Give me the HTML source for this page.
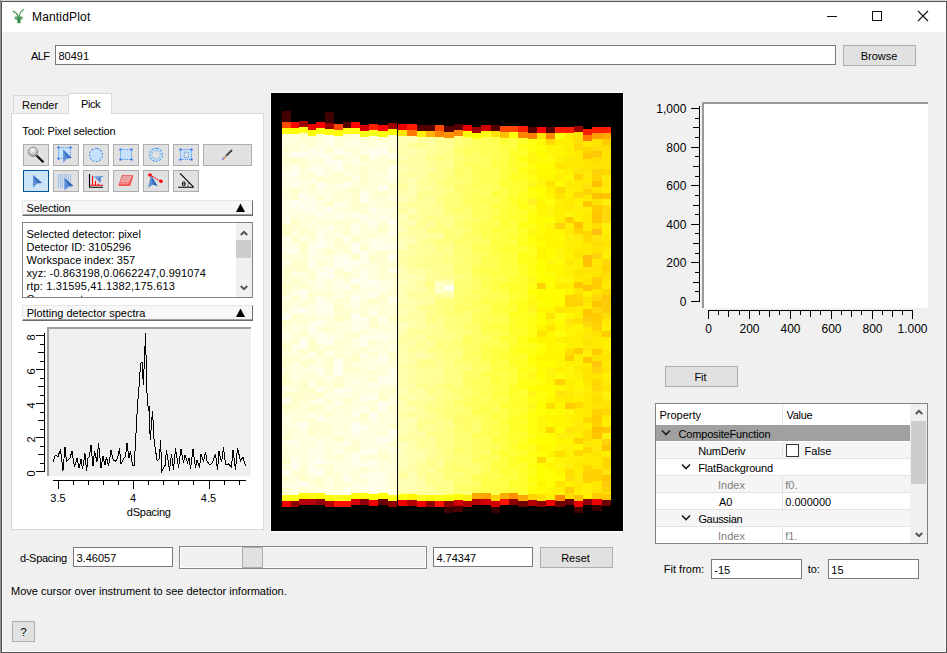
<!DOCTYPE html>
<html><head><meta charset="utf-8">
<style>
*{box-sizing:border-box}
html,body{margin:0;padding:0}
body{width:947px;height:653px;position:relative;overflow:hidden;background:#f0f0f0;font-family:"Liberation Sans",sans-serif;font-size:11px;color:#000}
.a{position:absolute}
.t{position:absolute;white-space:nowrap;line-height:13px;font-size:11px}
.btn{position:absolute;background:#e1e1e1;border:1px solid #adadad}
.inp{position:absolute;background:#fff;border:1px solid #7a7a7a}
.tb{position:absolute;background:#e1e1e1;border:1px solid #adadad}
.tb svg{position:absolute;left:0;top:0}
</style></head><body>
<!-- window frame -->
<div class="a" style="left:0;top:0;width:947px;height:1px;background:#d4d4d4"></div>
<div class="a" style="left:0;top:0;width:1px;height:653px;background:#8f8f8f"></div>
<div class="a" style="left:1px;top:1px;width:946px;height:652px;border:1px solid #555"></div>
<div class="a" style="left:945px;top:2px;width:1px;height:650px;background:#fdfdfd"></div>
<div class="a" style="left:2px;top:32px;width:1px;height:620px;background:#fafafa"></div>
<div class="a" style="left:2px;top:651px;width:944px;height:1px;background:#fdfdfd"></div>
<!-- title bar -->
<div class="a" style="left:2px;top:2px;width:943px;height:30px;background:#fff"></div>
<svg class="a" style="left:11px;top:7px" width="16" height="18" viewBox="0 0 16 18">
 <g fill="none" stroke="#3f9150" stroke-width="1.2" stroke-linecap="round" opacity="0.9">
  <path d="M2.2 4.4Q5.6 5.2 7.1 9"/>
  <path d="M12.8 2.5Q9.2 4 8.3 9"/>
 </g>
 <ellipse cx="7.6" cy="10.9" rx="4.3" ry="1.9" fill="#4a9a5a" opacity="0.85"/>
 <path d="M6 11.5H9.7L9.5 14.5Q10.3 15.5 9.4 16.3H6.6Q5.7 15.5 6.3 14.5z" fill="#3f9150" opacity="0.9"/>
 <path d="M7.4 9.5h1.4v6h-1.4z" fill="#2f8a45"/>
</svg>
<div class="t" style="left:32px;top:10px;font-size:12px;line-height:14px;letter-spacing:0.17px">MantidPlot</div>
<!-- min/max/close -->
<div class="a" style="left:827px;top:16px;width:10px;height:1px;background:#111"></div>
<div class="a" style="left:872px;top:11px;width:10px;height:10px;border:1px solid #111"></div>
<svg class="a" style="left:917px;top:10px" width="12" height="12" viewBox="0 0 12 12"><path d="M1 1L11 11M11 1L1 11" stroke="#111" stroke-width="1.1"/></svg>

<!-- ALF row -->
<div class="t" style="left:31px;top:50px;letter-spacing:-0.6px">ALF</div>
<div class="inp" style="left:55px;top:45px;width:781px;height:20px"></div>
<div class="t" style="left:58.5px;top:50px">80491</div>
<div class="btn" style="left:843px;top:45px;width:73px;height:21px"></div>
<div class="t" style="left:842.5px;top:50px;width:73px;text-align:center">Browse</div>

<!-- tabs -->
<div class="a" style="left:13px;top:95px;width:56px;height:19px;background:#f0f0f0;border:1px solid #d9d9d9;border-bottom:none"></div>
<div class="a" style="left:11px;top:113px;width:253px;height:417px;background:#fff;border:1px solid #d9d9d9"></div>
<div class="a" style="left:68px;top:93px;width:44px;height:21px;background:#fff;border:1px solid #d9d9d9;border-bottom:none"></div>
<div class="t" style="left:22px;top:99px">Render</div>
<div class="t" style="left:81px;top:98px;letter-spacing:-0.4px">Pick</div>
<div class="t" style="left:22.3px;top:125px;letter-spacing:-0.17px">Tool: Pixel selection</div>

<div class="tb" style="left:23px;top:144px;width:26px;height:22px;"><svg width="26" height="22" viewBox="1 1 26 22" style="left:-1px;top:-1px;position:absolute"><defs><radialGradient id="mg" cx="0.45" cy="0.3" r="0.75"><stop offset="0" stop-color="#fafafa"/><stop offset="0.6" stop-color="#c4c4c4"/><stop offset="1" stop-color="#8c8c8c"/></radialGradient></defs><path d="M14.5 12.5L20.8 18.6" stroke="#111" stroke-width="2.3" stroke-linecap="round"/><path d="M13.5 11.8L15.5 13.5" stroke="#555" stroke-width="1.6"/><circle cx="11" cy="8.8" r="4.7" fill="url(#mg)" stroke="#7a7a7a" stroke-width="0.8"/></svg></div><div class="tb" style="left:53px;top:144px;width:26px;height:22px;"><svg width="26" height="22" viewBox="1 1 26 22" style="left:-1px;top:-1px;position:absolute"><rect x="6.5" y="4.5" width="12.0" height="11.0" fill="#c4e2fb"/><path d="M8.5 4.5H17.5M8.5 15.5H17.5M6.5 6.5V14.5M18.5 6.5V14.5" stroke="#3d7fe0" stroke-width="1" stroke-dasharray="1 1.3"/><rect x="5.4" y="3.4" width="2.2" height="2.2" rx="0.4" fill="#1e6ff0"/><rect x="17.4" y="3.4" width="2.2" height="2.2" rx="0.4" fill="#1e6ff0"/><rect x="5.4" y="14.4" width="2.2" height="2.2" rx="0.4" fill="#1e6ff0"/><path d="M11 6.5L19.8 15L15.3 15.3L11.2 19.8z" fill="#5e93dc"/><path d="M11 6.5L19.8 15L15.3 15.3z" fill="#3b73cc"/></svg></div><div class="tb" style="left:83px;top:144px;width:26px;height:22px;"><svg width="26" height="22" viewBox="1 1 26 22" style="left:-1px;top:-1px;position:absolute"><circle cx="14" cy="12" r="6.5" fill="#c4e2fb"/><circle cx="14" cy="12" r="6.5" fill="none" stroke="#5b95dc" stroke-width="1.1" stroke-dasharray="2.1 1.3" transform="rotate(-80 14 12)"/></svg></div><div class="tb" style="left:113px;top:144px;width:26px;height:22px;"><svg width="26" height="22" viewBox="1 1 26 22" style="left:-1px;top:-1px;position:absolute"><rect x="8.5" y="6.5" width="11.0" height="10.0" fill="#c4e2fb"/><path d="M10.5 6.5H18.5M10.5 16.5H18.5M8.5 8.5V15.5M19.5 8.5V15.5" stroke="#3d7fe0" stroke-width="1" stroke-dasharray="1 1.3"/><rect x="7.4" y="5.4" width="2.2" height="2.2" rx="0.4" fill="#1e6ff0"/><rect x="18.4" y="5.4" width="2.2" height="2.2" rx="0.4" fill="#1e6ff0"/><rect x="7.4" y="15.4" width="2.2" height="2.2" rx="0.4" fill="#1e6ff0"/><rect x="18.4" y="15.4" width="2.2" height="2.2" rx="0.4" fill="#1e6ff0"/></svg></div><div class="tb" style="left:143px;top:144px;width:26px;height:22px;"><svg width="26" height="22" viewBox="1 1 26 22" style="left:-1px;top:-1px;position:absolute"><circle cx="14" cy="11.8" r="5.2" fill="none" stroke="#c4e2fb" stroke-width="2.6"/><circle cx="14" cy="11.8" r="6.5" fill="none" stroke="#5b95dc" stroke-width="1.1" stroke-dasharray="2.1 1.3" transform="rotate(-80 14 11.8)"/><circle cx="14" cy="11.8" r="4.2" fill="none" stroke="#4f8ddc" stroke-width="1" stroke-dasharray="1 1.4"/></svg></div><div class="tb" style="left:173px;top:144px;width:26px;height:22px;"><svg width="26" height="22" viewBox="1 1 26 22" style="left:-1px;top:-1px;position:absolute"><path d="M8.5 6.5h11v10h-11z M12.3 9.3v5.2h4.2v-5.2z" fill="#c4e2fb" fill-rule="evenodd"/><path d="M10.5 6.5H18.5M10.5 16.5H18.5M8.5 8.5V15.5M19.5 8.5V15.5" stroke="#3d7fe0" stroke-width="1" stroke-dasharray="1 1.3"/><rect x="7.4" y="5.4" width="2.2" height="2.2" rx="0.4" fill="#1e6ff0"/><rect x="18.4" y="5.4" width="2.2" height="2.2" rx="0.4" fill="#1e6ff0"/><rect x="7.4" y="15.4" width="2.2" height="2.2" rx="0.4" fill="#1e6ff0"/><rect x="18.4" y="15.4" width="2.2" height="2.2" rx="0.4" fill="#1e6ff0"/><path d="M12.3 9.3h4.2v5.2h-4.2z" fill="none" stroke="#4f8ddc" stroke-width="1" stroke-dasharray="1 1.1"/></svg></div><div class="tb" style="left:203px;top:144px;width:49px;height:22px;"><svg width="49" height="22" viewBox="1 1 49 22" style="left:-1px;top:-1px;position:absolute"><path d="M24.5 12.5L29.5 7.5" stroke="#444" stroke-width="1.8" stroke-linecap="round"/><path d="M21.5 15.5L23.3 13.7" stroke="#d89040" stroke-width="1.8"/><circle cx="21" cy="16" r="0.9" fill="#5a7ad8"/></svg></div><div class="tb" style="left:23px;top:170px;width:26px;height:22px;background:#cce4f7;border-color:#005499"><svg width="26" height="22" viewBox="1 1 26 22" style="left:-1px;top:-1px;position:absolute"><path d="M11.0 6.0L20.0 14.0L15.5 14.3L11.0 18.5z" fill="#5a8fd8"/><path d="M11.0 6.0L20.0 14.0L15.5 14.3z" fill="#3468b8"/></svg></div><div class="tb" style="left:53px;top:170px;width:26px;height:22px;"><svg width="26" height="22" viewBox="1 1 26 22" style="left:-1px;top:-1px;position:absolute"><rect x="5.8" y="5" width="0.9" height="14" fill="#8fbaf0"/><rect x="7.8" y="5" width="0.9" height="14" fill="#8fbaf0"/><rect x="9.8" y="5" width="0.9" height="14" fill="#8fbaf0"/><rect x="11.8" y="5" width="0.9" height="14" fill="#8fbaf0"/><rect x="13.8" y="5" width="0.9" height="14" fill="#8fbaf0"/><rect x="15.8" y="5" width="0.9" height="14" fill="#8fbaf0"/><rect x="17.8" y="5" width="0.9" height="14" fill="#8fbaf0"/><path d="M12.5 9.0L21.5 17.0L17.0 17.3L12.5 21.5z" fill="#5a8fd8"/><path d="M12.5 9.0L21.5 17.0L17.0 17.3z" fill="#3468b8"/></svg></div><div class="tb" style="left:83px;top:170px;width:26px;height:22px;"><svg width="26" height="22" viewBox="1 1 26 22" style="left:-1px;top:-1px;position:absolute"><defs><linearGradient id="bg10" x1="0" y1="0" x2="1" y2="1"><stop offset="0" stop-color="#9cc4f2"/><stop offset="1" stop-color="#1f58b0"/></linearGradient></defs><path d="M7.5 5V18.3H21" fill="none" stroke="#000" stroke-width="1.1"/><path d="M8 16.3H21M10.5 16.3V6.8M13.5 16.3V12M16.5 16.3V14.8" stroke="#f00" stroke-width="1.1"/><path d="M11 7H22L19.2 8.6L18.4 13.8z" fill="url(#bg10)"/></svg></div><div class="tb" style="left:113px;top:170px;width:26px;height:22px;"><svg width="26" height="22" viewBox="1 1 26 22" style="left:-1px;top:-1px;position:absolute"><path d="M10.5 6H20Q21.6 6.3 21 8L18.6 15.8Q18.1 17 16.8 17H7.3Q6.2 17 6.6 15.8L9.7 7Q10 6 10.5 6z" fill="#ef5656"/><path d="M11.2 7.2H19.2L16.7 12.9H8.8z" fill="#e9a0a0" stroke="#f8c8c8" stroke-width="0.6"/><path d="M8.2 13.6H16.6L16.1 15.2H7.7z" fill="#f78a8a"/></svg></div><div class="tb" style="left:143px;top:170px;width:26px;height:22px;"><svg width="26" height="22" viewBox="1 1 26 22" style="left:-1px;top:-1px;position:absolute"><path d="M8 6L18.5 12.2" stroke="#f00" stroke-width="1.2" stroke-dasharray="1.6 1"/><circle cx="8" cy="6" r="1.8" fill="#f00"/><circle cx="19" cy="12.3" r="1.8" fill="#f00"/><path d="M9 6.5L15.5 17L11 15.5L6 18.8z" fill="#5a8fd8"/><path d="M9 6.5L15.5 17L11 15.5z" fill="#3468b8"/></svg></div><div class="tb" style="left:173px;top:170px;width:26px;height:22px;"><svg width="26" height="22" viewBox="1 1 26 22" style="left:-1px;top:-1px;position:absolute"><path d="M8 4.4L21.4 17.8M6.1 18.3H21.8" stroke="#000" stroke-width="1.1"/><ellipse cx="11.8" cy="14.8" rx="1.5" ry="2.1" fill="none" stroke="#000" stroke-width="1"/><path d="M10.4 14.8h2.8" stroke="#000" stroke-width="0.8"/><path d="M16.6 14.2Q15.7 16 16.2 18" fill="none" stroke="#000" stroke-width="0.9" stroke-dasharray="0.9 0.6"/></svg></div>

<!-- Selection header -->
<div class="a" style="left:22px;top:200px;width:231px;height:16px;background:#f7f7f7;border-top:1px solid #e6e6e6;border-left:1px solid #e6e6e6;border-right:1px solid #696969;border-bottom:1px solid #696969;box-shadow:inset 0 -1px #a0a0a0"></div>
<div class="t" style="left:26.5px;top:202px;letter-spacing:-0.15px">Selection</div>
<svg class="a" style="left:236px;top:203px" width="10" height="10"><path d="M4.5 0.5L9 9H0z" fill="#000"/></svg>

<!-- text box -->
<div class="a" style="left:22px;top:222px;width:231px;height:76px;background:#fff;border:1px solid #828282;overflow:hidden">
 <div class="t" style="left:3.5px;top:5px;line-height:13px">Selected detector: pixel<br>Detector ID: 3105296<br>Workspace index: 357<br><span style="letter-spacing:0.1px">xyz: -0.863198,0.0662247,0.991074</span><br><span style="letter-spacing:0.15px">rtp: 1.31595,41.1382,175.613</span><br>Component: x</div>
 <div class="a" style="left:213px;top:0;width:16px;height:74px;background:#f0f0f0"></div>
 <div class="a" style="left:213px;top:17px;width:15px;height:18px;background:#cdcdcd"></div>
 <svg class="a" style="left:216px;top:6px" width="10" height="8"><path d="M1.8 6L5 2.8L8.2 6" fill="none" stroke="#555" stroke-width="2"/></svg>
 <svg class="a" style="left:216px;top:61px" width="10" height="8"><path d="M1.8 2L5 5.2L8.2 2" fill="none" stroke="#555" stroke-width="2"/></svg>
</div>

<!-- Plotting header -->
<div class="a" style="left:22px;top:305px;width:231px;height:16px;background:#f7f7f7;border-top:1px solid #e6e6e6;border-left:1px solid #e6e6e6;border-right:1px solid #696969;border-bottom:1px solid #696969;box-shadow:inset 0 -1px #a0a0a0"></div>
<div class="t" style="left:26.7px;top:307px">Plotting detector spectra</div>
<svg class="a" style="left:236px;top:308px" width="10" height="10"><path d="M4.5 0.5L9 9H0z" fill="#000"/></svg>

<!-- left plot -->
<div class="a" style="left:47px;top:327px;width:204px;height:149px;background:#f0f0f0;border-top:2px solid #a0a0a0;border-left:2px solid #a0a0a0"></div>
<svg class="a" style="left:0;top:0" width="270" height="540">
 <g shape-rendering="crispEdges">
  <path fill="#000" d="M44 333h1v139h-1z"/><path fill="#000" d="M36 471h8v1h-8z"/><path fill="#000" d="M40 463h4v1h-4z"/><path fill="#000" d="M38 454h6v1h-6z"/><path fill="#000" d="M40 446h4v1h-4z"/><path fill="#000" d="M36 437h8v1h-8z"/><path fill="#000" d="M40 429h4v1h-4z"/><path fill="#000" d="M38 420h6v1h-6z"/><path fill="#000" d="M40 412h4v1h-4z"/><path fill="#000" d="M36 403h8v1h-8z"/><path fill="#000" d="M40 395h4v1h-4z"/><path fill="#000" d="M38 386h6v1h-6z"/><path fill="#000" d="M40 378h4v1h-4z"/><path fill="#000" d="M36 369h8v1h-8z"/><path fill="#000" d="M40 361h4v1h-4z"/><path fill="#000" d="M38 352h6v1h-6z"/><path fill="#000" d="M40 344h4v1h-4z"/><path fill="#000" d="M36 335h8v1h-8z"/><path fill="#000" d="M53 480h193v1h-193z"/><path fill="#000" d="M58 480h1v9h-1z"/><path fill="#000" d="M73 480h1v5h-1z"/><path fill="#000" d="M88 480h1v5h-1z"/><path fill="#000" d="M103 480h1v5h-1z"/><path fill="#000" d="M118 480h1v5h-1z"/><path fill="#000" d="M133 480h1v9h-1z"/><path fill="#000" d="M148 480h1v5h-1z"/><path fill="#000" d="M163 480h1v5h-1z"/><path fill="#000" d="M178 480h1v5h-1z"/><path fill="#000" d="M193 480h1v5h-1z"/><path fill="#000" d="M209 480h1v9h-1z"/><path fill="#000" d="M224 480h1v5h-1z"/><path fill="#000" d="M239 480h1v5h-1z"/>
 </g>
 <polyline points="53.0,461.5 55.5,455.2 58.0,456.6 60.5,449.2 63.0,470.6 65.0,446.7 66.5,461.1 68.0,460.2 70.0,457.7 72.0,451.4 74.5,467.2 77.0,458.1 79.0,468.2 81.0,459.2 82.5,468.9 85.0,453.4 86.5,471.0 88.0,458.2 89.5,456.3 91.0,444.7 93.0,466.2 94.5,451.5 97.0,461.4 98.5,443.3 101.0,468.0 103.0,456.4 105.0,464.7 106.5,457.1 108.5,466.4 111.0,450.5 113.5,460.6 115.5,461.2 117.5,458.5 119.5,448.3 121.0,463.6 123.5,458.9 125.5,456.1 127.0,443.1 129.0,458.1 130.5,451.3 132.5,465.4 134.2,465.6 137.6,403.7 139.2,385.0 140.6,363.5 142.2,362.4 143.3,385.0 145.6,333.0 146.1,360.0 147.2,399.0 148.6,410.6 149.2,406.0 150.2,440.4 152.5,410.6 154.1,440.4 157.1,461.0 159.4,458.7 160.6,440.4 161.7,471.3 165.0,465.6 166.5,450.2 169.5,470.5 171.5,454.2 173.5,469.8 175.5,448.5 178.5,467.5 181.0,449.2 183.5,463.1 185.0,454.9 187.5,462.2 189.0,457.8 190.5,468.9 193.0,448.7 195.5,468.2 197.0,460.1 199.5,467.9 201.0,454.2 203.5,460.8 205.5,452.4 207.0,460.9 210.0,465.3 212.5,462.6 215.5,453.7 217.5,470.4 219.0,450.9 221.5,462.4 223.5,447.5 225.5,464.6 228.5,463.9 231.5,467.2 233.0,450.1 235.5,469.6 237.5,447.6 240.5,461.2 243.0,456.9 245.5,466.2" fill="none" stroke="#000" stroke-width="1" shape-rendering="crispEdges"/>
</svg>
<div class="t" style="left:43.0px;top:491.7px;width:30px;text-align:center">3.5</div><div class="t" style="left:118.0px;top:491.7px;width:30px;text-align:center">4</div><div class="t" style="left:193.5px;top:491.7px;width:30px;text-align:center">4.5</div><div class="t" style="left:21.2px;top:467.0px;width:20px;text-align:center;transform:rotate(-90deg)">0</div><div class="t" style="left:21.2px;top:433.0px;width:20px;text-align:center;transform:rotate(-90deg)">2</div><div class="t" style="left:21.2px;top:399.0px;width:20px;text-align:center;transform:rotate(-90deg)">4</div><div class="t" style="left:21.2px;top:365.0px;width:20px;text-align:center;transform:rotate(-90deg)">6</div><div class="t" style="left:21.2px;top:331.0px;width:20px;text-align:center;transform:rotate(-90deg)">8</div>
<div class="t" style="left:108.8px;top:506px;width:80px;text-align:center;letter-spacing:-0.25px">dSpacing</div>

<!-- instrument view -->
<div class="a" style="left:270px;top:92px;width:354px;height:440px;background:#fff"></div>
<div class="a" style="left:271px;top:93px;width:352px;height:438px;background:#000"></div>
<svg class="a" style="left:0;top:0" width="947" height="653" shape-rendering="crispEdges"><path fill="#420000" d="M282 111h9v11h-9zM574 507h9v6h-9z"/><path fill="#ff4800" d="M282 122h9v6h-9zM334 124h9v6h-9zM435 125h9v6h-9zM500 126h9v6h-9zM509 126h9v6h-9z"/><path fill="#ffff0c" d="M282 128h9v6h-9zM325 129h9v6h-9zM343 495h8v6h-8zM398 494h9v6h-9zM509 132h9v6h-9zM528 145h9v6h-9zM528 163h9v6h-9zM528 187h9v6h-9zM528 211h9v6h-9zM528 217h9v6h-9zM528 235h9v6h-9zM528 427h9v6h-9zM528 439h9v6h-9zM528 487h9v6h-9zM537 301h9v6h-9zM537 343h9v6h-9zM537 379h9v6h-9zM537 391h9v6h-9zM537 397h9v6h-9zM537 433h9v6h-9zM537 451h9v6h-9zM546 157h9v6h-9zM546 199h9v6h-9zM555 133h10v6h-10zM555 313h10v6h-10zM555 331h10v6h-10z"/><path fill="#f00000" d="M282 501h9v6h-9zM369 500h9v6h-9zM398 500h9v6h-9zM417 501h9v6h-9zM546 500h9v6h-9zM574 501h9v6h-9zM592 499h10v6h-10z"/><path fill="#ffff18" d="M282 495h9v6h-9zM299 127h9v6h-9zM343 128h8v6h-8zM360 131h9v6h-9zM518 156h10v6h-10zM518 168h10v6h-10zM518 204h10v6h-10zM518 222h10v6h-10zM518 252h10v6h-10zM518 258h10v6h-10zM518 306h10v6h-10zM518 336h10v6h-10zM518 348h10v6h-10zM518 378h10v6h-10zM518 384h10v6h-10zM518 444h10v6h-10zM518 456h10v6h-10zM528 223h9v6h-9zM528 283h9v6h-9zM528 325h9v6h-9zM528 379h9v6h-9zM528 451h9v6h-9z"/><path fill="#ffffde" d="M282 134h9v6h-9zM282 152h9v6h-9zM282 164h9v6h-9zM282 194h9v6h-9zM282 308h9v6h-9zM282 338h9v6h-9zM282 350h9v6h-9zM282 422h9v6h-9zM282 428h9v6h-9zM282 494h9v1h-9zM291 134h8v6h-8zM291 212h8v6h-8zM291 230h8v6h-8zM291 368h8v6h-8zM291 386h8v6h-8zM291 410h8v6h-8zM291 434h8v6h-8zM291 446h8v6h-8zM291 452h8v6h-8zM291 476h8v6h-8zM299 145h9v6h-9zM299 169h9v6h-9zM299 187h9v6h-9zM299 211h9v6h-9zM299 271h9v6h-9zM299 325h9v6h-9zM299 355h9v6h-9zM299 433h9v6h-9zM299 439h9v6h-9zM299 445h9v6h-9zM299 451h9v6h-9zM299 457h9v6h-9zM308 160h8v6h-8zM308 190h8v6h-8zM308 220h8v6h-8zM308 238h8v6h-8zM308 280h8v6h-8zM308 310h8v6h-8zM308 334h8v6h-8zM308 370h8v6h-8zM308 400h8v6h-8zM308 442h8v6h-8zM308 484h8v6h-8zM316 140h9v6h-9zM316 200h9v6h-9zM316 224h9v6h-9zM316 248h9v6h-9zM316 314h9v6h-9zM316 356h9v6h-9zM316 362h9v6h-9zM316 374h9v6h-9zM316 434h9v6h-9zM316 464h9v6h-9zM316 488h9v5h-9zM325 165h9v6h-9zM325 171h9v6h-9zM325 183h9v6h-9zM325 189h9v6h-9zM325 213h9v6h-9zM325 231h9v6h-9zM325 237h9v6h-9zM325 255h9v6h-9zM325 285h9v6h-9zM325 297h9v6h-9zM325 315h9v6h-9zM325 417h9v6h-9zM325 435h9v6h-9zM325 441h9v6h-9zM325 459h9v6h-9zM325 489h9v6h-9zM334 208h9v6h-9zM334 274h9v6h-9zM334 286h9v6h-9zM334 322h9v6h-9zM334 328h9v6h-9zM334 334h9v6h-9zM334 394h9v6h-9zM334 412h9v6h-9zM334 418h9v6h-9zM334 424h9v6h-9zM334 460h9v6h-9zM334 490h9v5h-9zM343 200h8v6h-8zM343 212h8v6h-8zM343 320h8v6h-8zM343 326h8v6h-8zM343 350h8v6h-8zM343 374h8v6h-8zM343 380h8v6h-8zM343 422h8v6h-8zM343 434h8v6h-8zM343 452h8v6h-8zM343 464h8v6h-8zM351 134h9v6h-9zM351 164h9v6h-9zM351 266h9v6h-9zM351 272h9v6h-9zM351 290h9v6h-9zM351 308h9v6h-9zM351 344h9v6h-9zM351 362h9v6h-9zM351 374h9v6h-9zM351 386h9v6h-9zM351 398h9v6h-9zM351 404h9v6h-9zM351 416h9v6h-9zM351 488h9v5h-9zM360 221h9v6h-9zM360 239h9v6h-9zM360 263h9v6h-9zM360 287h9v6h-9zM360 359h9v6h-9zM360 365h9v6h-9zM360 377h9v6h-9zM360 383h9v6h-9zM360 389h9v6h-9zM360 401h9v6h-9zM360 443h9v6h-9zM369 202h9v6h-9zM369 214h9v6h-9zM369 226h9v6h-9zM369 262h9v6h-9zM369 268h9v6h-9zM369 274h9v6h-9zM369 304h9v6h-9zM369 388h9v6h-9zM369 424h9v6h-9zM369 430h9v6h-9zM378 173h10v6h-10zM378 233h10v6h-10zM378 329h10v6h-10zM378 341h10v6h-10zM378 371h10v6h-10zM378 383h10v6h-10zM378 419h10v6h-10zM378 425h10v6h-10zM378 461h10v6h-10zM388 141h9v6h-9zM388 207h9v6h-9zM388 213h9v6h-9zM388 249h9v6h-9zM388 279h9v6h-9zM388 285h9v6h-9zM388 327h9v6h-9zM388 363h9v6h-9zM388 411h9v6h-9zM388 417h9v6h-9zM388 465h9v6h-9z"/><path fill="#ffffe4" d="M282 140h9v6h-9zM282 176h9v6h-9zM282 182h9v6h-9zM282 200h9v6h-9zM282 206h9v6h-9zM282 212h9v6h-9zM282 242h9v6h-9zM282 260h9v6h-9zM282 296h9v6h-9zM282 386h9v6h-9zM282 416h9v6h-9zM282 440h9v6h-9zM282 482h9v6h-9zM291 176h8v6h-8zM291 206h8v6h-8zM291 242h8v6h-8zM291 272h8v6h-8zM291 290h8v6h-8zM291 302h8v6h-8zM291 326h8v6h-8zM291 344h8v6h-8zM291 350h8v6h-8zM291 362h8v6h-8zM291 374h8v6h-8zM291 422h8v6h-8zM291 482h8v6h-8zM291 488h8v6h-8zM299 181h9v6h-9zM299 199h9v6h-9zM299 235h9v6h-9zM299 295h9v6h-9zM299 367h9v6h-9zM299 427h9v6h-9zM308 154h8v6h-8zM308 178h8v6h-8zM308 256h8v6h-8zM308 304h8v6h-8zM308 364h8v6h-8zM308 436h8v6h-8zM308 448h8v6h-8zM308 454h8v6h-8zM308 472h8v6h-8zM316 134h9v6h-9zM316 146h9v6h-9zM316 188h9v6h-9zM316 206h9v6h-9zM316 254h9v6h-9zM316 266h9v6h-9zM316 278h9v6h-9zM316 284h9v6h-9zM316 440h9v6h-9zM316 452h9v6h-9zM325 195h9v6h-9zM325 243h9v6h-9zM325 333h9v6h-9zM325 375h9v6h-9zM325 393h9v6h-9zM325 405h9v6h-9zM325 477h9v6h-9zM325 483h9v6h-9zM334 184h9v6h-9zM334 232h9v6h-9zM334 250h9v6h-9zM334 292h9v6h-9zM334 430h9v6h-9zM334 442h9v6h-9zM334 466h9v6h-9zM343 140h8v6h-8zM343 170h8v6h-8zM343 392h8v6h-8zM343 458h8v6h-8zM343 470h8v6h-8zM351 140h9v6h-9zM351 158h9v6h-9zM351 176h9v6h-9zM351 230h9v6h-9zM351 302h9v6h-9zM351 326h9v6h-9zM351 338h9v6h-9zM351 380h9v6h-9zM351 434h9v6h-9zM351 464h9v6h-9zM351 482h9v6h-9zM360 143h9v6h-9zM360 149h9v6h-9zM360 293h9v6h-9zM360 323h9v6h-9zM360 353h9v6h-9zM360 431h9v6h-9zM360 437h9v6h-9zM360 473h9v6h-9zM369 286h9v6h-9zM369 328h9v6h-9zM369 346h9v6h-9zM369 358h9v6h-9zM369 364h9v6h-9zM369 418h9v6h-9zM369 436h9v6h-9zM369 442h9v6h-9zM369 466h9v6h-9zM378 143h10v6h-10zM378 209h10v6h-10zM378 239h10v6h-10zM378 281h10v6h-10zM378 287h10v6h-10zM378 443h10v6h-10zM378 479h10v6h-10zM378 485h10v6h-10zM388 195h9v6h-9zM388 225h9v6h-9zM388 333h9v6h-9zM388 345h9v6h-9zM388 381h9v6h-9zM388 399h9v6h-9zM388 447h9v6h-9zM388 489h9v6h-9z"/><path fill="#ffffd2" d="M282 146h9v6h-9zM282 158h9v6h-9zM282 266h9v6h-9zM282 272h9v6h-9zM282 290h9v6h-9zM282 356h9v6h-9zM282 362h9v6h-9zM282 392h9v6h-9zM282 434h9v6h-9zM282 476h9v6h-9zM291 194h8v6h-8zM291 224h8v6h-8zM291 266h8v6h-8zM291 296h8v6h-8zM291 314h8v6h-8zM291 338h8v6h-8zM291 356h8v6h-8zM291 404h8v6h-8zM291 470h8v6h-8zM299 157h9v6h-9zM299 163h9v6h-9zM299 259h9v6h-9zM299 301h9v6h-9zM299 319h9v6h-9zM299 391h9v6h-9zM299 397h9v6h-9zM299 469h9v6h-9zM299 487h9v6h-9zM308 136h8v6h-8zM308 142h8v6h-8zM308 184h8v6h-8zM308 232h8v6h-8zM308 274h8v6h-8zM308 292h8v6h-8zM308 394h8v6h-8zM308 418h8v6h-8zM308 424h8v6h-8zM308 478h8v6h-8zM308 490h8v3h-8zM316 176h9v6h-9zM316 194h9v6h-9zM316 260h9v6h-9zM316 290h9v6h-9zM316 404h9v6h-9zM316 422h9v6h-9zM316 428h9v6h-9zM316 476h9v6h-9zM316 482h9v6h-9zM325 147h9v6h-9zM325 177h9v6h-9zM325 291h9v6h-9zM325 327h9v6h-9zM325 345h9v6h-9zM325 363h9v6h-9zM325 369h9v6h-9zM325 399h9v6h-9zM325 411h9v6h-9zM325 429h9v6h-9zM325 465h9v6h-9zM325 471h9v6h-9zM334 154h9v6h-9zM334 172h9v6h-9zM334 178h9v6h-9zM334 196h9v6h-9zM334 220h9v6h-9zM334 244h9v6h-9zM334 268h9v6h-9zM334 298h9v6h-9zM334 310h9v6h-9zM334 340h9v6h-9zM334 346h9v6h-9zM334 352h9v6h-9zM334 376h9v6h-9zM334 454h9v6h-9zM334 478h9v6h-9zM334 484h9v6h-9zM343 134h8v6h-8zM343 164h8v6h-8zM343 176h8v6h-8zM343 188h8v6h-8zM343 218h8v6h-8zM343 224h8v6h-8zM343 230h8v6h-8zM343 248h8v6h-8zM343 296h8v6h-8zM343 308h8v6h-8zM343 332h8v6h-8zM343 338h8v6h-8zM343 356h8v6h-8zM343 362h8v6h-8zM343 368h8v6h-8zM343 446h8v6h-8zM351 194h9v6h-9zM351 206h9v6h-9zM351 284h9v6h-9zM351 332h9v6h-9zM351 350h9v6h-9zM351 368h9v6h-9zM351 440h9v6h-9zM351 446h9v6h-9zM360 137h9v6h-9zM360 179h9v6h-9zM360 203h9v6h-9zM360 209h9v6h-9zM360 245h9v6h-9zM360 305h9v6h-9zM360 311h9v6h-9zM360 347h9v6h-9zM360 467h9v6h-9zM369 160h9v6h-9zM369 196h9v6h-9zM369 232h9v6h-9zM369 316h9v6h-9zM369 340h9v6h-9zM369 352h9v6h-9zM369 370h9v6h-9zM369 376h9v6h-9zM378 137h10v6h-10zM378 161h10v6h-10zM378 167h10v6h-10zM378 203h10v6h-10zM378 221h10v6h-10zM378 257h10v6h-10zM378 263h10v6h-10zM378 269h10v6h-10zM378 275h10v6h-10zM378 293h10v6h-10zM378 299h10v6h-10zM378 311h10v6h-10zM378 389h10v6h-10zM378 449h10v6h-10zM378 491h10v2h-10zM388 147h9v6h-9zM388 201h9v6h-9zM388 261h9v6h-9zM388 273h9v6h-9zM388 291h9v6h-9zM388 351h9v6h-9zM388 405h9v6h-9zM388 441h9v6h-9z"/><path fill="#ffffea" d="M282 170h9v6h-9zM282 218h9v6h-9zM282 236h9v6h-9zM282 248h9v6h-9zM282 332h9v6h-9zM291 164h8v6h-8zM291 248h8v6h-8zM291 308h8v6h-8zM291 440h8v6h-8zM299 337h9v6h-9zM308 148h8v6h-8zM308 166h8v6h-8zM308 196h8v6h-8zM308 202h8v6h-8zM308 208h8v6h-8zM308 244h8v6h-8zM308 250h8v6h-8zM308 322h8v6h-8zM308 352h8v6h-8zM308 382h8v6h-8zM308 412h8v6h-8zM308 460h8v6h-8zM316 152h9v6h-9zM316 164h9v6h-9zM316 170h9v6h-9zM316 212h9v6h-9zM316 230h9v6h-9zM316 236h9v6h-9zM316 272h9v6h-9zM316 296h9v6h-9zM316 320h9v6h-9zM316 332h9v6h-9zM316 338h9v6h-9zM316 368h9v6h-9zM316 386h9v6h-9zM316 398h9v6h-9zM316 416h9v6h-9zM316 446h9v6h-9zM325 135h9v6h-9zM325 141h9v6h-9zM325 153h9v6h-9zM325 225h9v6h-9zM325 303h9v6h-9zM325 309h9v6h-9zM325 351h9v6h-9zM334 166h9v6h-9zM334 202h9v6h-9zM334 214h9v6h-9zM334 256h9v6h-9zM334 280h9v6h-9zM334 358h9v6h-9zM334 400h9v6h-9zM334 448h9v6h-9zM343 152h8v6h-8zM343 236h8v6h-8zM343 254h8v6h-8zM343 266h8v6h-8zM343 386h8v6h-8zM343 440h8v6h-8zM351 212h9v6h-9zM351 224h9v6h-9zM351 260h9v6h-9zM351 320h9v6h-9zM351 410h9v6h-9zM351 452h9v6h-9zM351 458h9v6h-9zM360 191h9v6h-9zM360 197h9v6h-9zM360 251h9v6h-9zM360 257h9v6h-9zM360 269h9v6h-9zM360 275h9v6h-9zM360 281h9v6h-9zM360 317h9v6h-9zM360 335h9v6h-9zM360 341h9v6h-9zM360 395h9v6h-9zM360 407h9v6h-9zM360 425h9v6h-9zM360 449h9v6h-9zM360 461h9v6h-9zM360 485h9v6h-9zM369 154h9v6h-9zM369 208h9v6h-9zM369 220h9v6h-9zM369 238h9v6h-9zM369 244h9v6h-9zM369 292h9v6h-9zM369 310h9v6h-9zM369 334h9v6h-9zM369 382h9v6h-9zM369 394h9v6h-9zM369 448h9v6h-9zM369 460h9v6h-9zM369 472h9v6h-9zM369 478h9v6h-9zM369 484h9v6h-9zM369 490h9v4h-9zM378 215h10v6h-10zM378 245h10v6h-10zM378 317h10v6h-10zM378 335h10v6h-10zM378 353h10v6h-10zM378 359h10v6h-10zM378 407h10v6h-10zM378 473h10v6h-10zM388 153h9v6h-9zM388 165h9v6h-9zM388 171h9v6h-9zM388 177h9v6h-9zM388 231h9v6h-9zM388 243h9v6h-9zM388 267h9v6h-9zM388 297h9v6h-9zM388 375h9v6h-9zM388 435h9v6h-9z"/><path fill="#ffffd8" d="M282 188h9v6h-9zM282 254h9v6h-9zM282 278h9v6h-9zM282 302h9v6h-9zM282 326h9v6h-9zM282 368h9v6h-9zM282 410h9v6h-9zM282 446h9v6h-9zM282 452h9v6h-9zM282 464h9v6h-9zM291 140h8v6h-8zM291 146h8v6h-8zM291 254h8v6h-8zM291 284h8v6h-8zM291 320h8v6h-8zM291 332h8v6h-8zM291 380h8v6h-8zM291 416h8v6h-8zM291 428h8v6h-8zM299 139h9v6h-9zM299 175h9v6h-9zM299 217h9v6h-9zM299 223h9v6h-9zM299 253h9v6h-9zM299 277h9v6h-9zM299 313h9v6h-9zM299 373h9v6h-9zM299 403h9v6h-9zM299 409h9v6h-9zM299 415h9v6h-9zM299 463h9v6h-9zM308 172h8v6h-8zM308 214h8v6h-8zM308 226h8v6h-8zM308 268h8v6h-8zM308 286h8v6h-8zM308 298h8v6h-8zM308 316h8v6h-8zM308 376h8v6h-8zM316 158h9v6h-9zM316 218h9v6h-9zM316 326h9v6h-9zM316 344h9v6h-9zM316 410h9v6h-9zM325 219h9v6h-9zM325 261h9v6h-9zM325 279h9v6h-9zM325 321h9v6h-9zM325 381h9v6h-9zM325 387h9v6h-9zM325 423h9v6h-9zM325 447h9v6h-9zM325 453h9v6h-9zM334 136h9v6h-9zM334 142h9v6h-9zM334 190h9v6h-9zM334 226h9v6h-9zM334 406h9v6h-9zM334 472h9v6h-9zM343 146h8v6h-8zM343 158h8v6h-8zM343 194h8v6h-8zM343 206h8v6h-8zM343 242h8v6h-8zM343 278h8v6h-8zM343 290h8v6h-8zM343 302h8v6h-8zM343 344h8v6h-8zM343 404h8v6h-8zM343 410h8v6h-8zM343 416h8v6h-8zM343 428h8v6h-8zM343 482h8v6h-8zM343 494h8v1h-8zM351 146h9v6h-9zM351 152h9v6h-9zM351 170h9v6h-9zM351 182h9v6h-9zM351 218h9v6h-9zM351 392h9v6h-9zM351 470h9v6h-9zM351 476h9v6h-9zM360 161h9v6h-9zM360 185h9v6h-9zM360 227h9v6h-9zM360 233h9v6h-9zM360 299h9v6h-9zM360 329h9v6h-9zM360 371h9v6h-9zM360 419h9v6h-9zM360 455h9v6h-9zM360 479h9v6h-9zM360 491h9v2h-9zM369 136h9v6h-9zM369 142h9v6h-9zM369 166h9v6h-9zM369 172h9v6h-9zM369 178h9v6h-9zM369 184h9v6h-9zM369 190h9v6h-9zM369 250h9v6h-9zM369 400h9v6h-9zM369 406h9v6h-9zM369 454h9v6h-9zM378 155h10v6h-10zM378 179h10v6h-10zM378 197h10v6h-10zM378 305h10v6h-10zM378 323h10v6h-10zM378 347h10v6h-10zM378 365h10v6h-10zM378 413h10v6h-10zM378 431h10v6h-10zM378 467h10v6h-10zM388 135h9v6h-9zM388 189h9v6h-9zM388 237h9v6h-9zM388 303h9v6h-9zM388 309h9v6h-9zM388 321h9v6h-9zM388 339h9v6h-9zM388 357h9v6h-9zM388 393h9v6h-9zM388 453h9v6h-9zM388 459h9v6h-9zM388 471h9v6h-9zM388 477h9v6h-9zM388 483h9v6h-9z"/><path fill="#ffffcc" d="M282 224h9v6h-9zM282 230h9v6h-9zM282 284h9v6h-9zM282 320h9v6h-9zM282 344h9v6h-9zM282 374h9v6h-9zM282 380h9v6h-9zM282 404h9v6h-9zM282 458h9v6h-9zM282 488h9v6h-9zM291 158h8v6h-8zM291 188h8v6h-8zM291 218h8v6h-8zM291 236h8v6h-8zM291 260h8v6h-8zM291 278h8v6h-8zM291 392h8v6h-8zM291 398h8v6h-8zM291 494h8v1h-8zM299 133h9v6h-9zM299 229h9v6h-9zM299 241h9v6h-9zM299 247h9v6h-9zM299 265h9v6h-9zM299 283h9v6h-9zM299 331h9v6h-9zM299 349h9v6h-9zM299 361h9v6h-9zM299 379h9v6h-9zM299 385h9v6h-9zM299 475h9v6h-9zM308 340h8v6h-8zM308 346h8v6h-8zM308 358h8v6h-8zM308 388h8v6h-8zM308 406h8v6h-8zM308 430h8v6h-8zM316 350h9v6h-9zM316 380h9v6h-9zM316 392h9v6h-9zM325 201h9v6h-9zM325 249h9v6h-9zM325 357h9v6h-9zM334 238h9v6h-9zM334 304h9v6h-9zM334 316h9v6h-9zM334 382h9v6h-9zM334 436h9v6h-9zM343 272h8v6h-8zM343 314h8v6h-8zM343 398h8v6h-8zM351 188h9v6h-9zM351 200h9v6h-9zM351 236h9v6h-9zM351 254h9v6h-9zM351 356h9v6h-9zM360 155h9v6h-9zM360 167h9v6h-9zM360 173h9v6h-9zM360 413h9v6h-9zM369 256h9v6h-9zM369 298h9v6h-9zM369 322h9v6h-9zM378 191h10v6h-10zM378 227h10v6h-10zM378 251h10v6h-10zM378 395h10v6h-10zM378 455h10v6h-10zM388 159h9v6h-9zM388 183h9v6h-9zM388 315h9v6h-9zM388 387h9v6h-9zM388 423h9v6h-9z"/><path fill="#fffff0" d="M282 314h9v6h-9zM282 398h9v6h-9zM282 470h9v6h-9zM291 152h8v6h-8zM291 170h8v6h-8zM291 182h8v6h-8zM291 200h8v6h-8zM291 458h8v6h-8zM291 464h8v6h-8zM299 151h9v6h-9zM299 193h9v6h-9zM299 205h9v6h-9zM299 289h9v6h-9zM299 307h9v6h-9zM299 343h9v6h-9zM299 421h9v6h-9zM299 481h9v6h-9zM308 262h8v6h-8zM308 328h8v6h-8zM308 466h8v6h-8zM316 182h9v6h-9zM316 242h9v6h-9zM316 302h9v6h-9zM316 308h9v6h-9zM316 458h9v6h-9zM316 470h9v6h-9zM325 159h9v6h-9zM325 207h9v6h-9zM325 267h9v6h-9zM325 273h9v6h-9zM325 339h9v6h-9zM334 148h9v6h-9zM334 160h9v6h-9zM334 262h9v6h-9zM334 364h9v6h-9zM334 370h9v6h-9zM334 388h9v6h-9zM343 182h8v6h-8zM343 260h8v6h-8zM343 284h8v6h-8zM343 476h8v6h-8zM343 488h8v6h-8zM351 242h9v6h-9zM351 248h9v6h-9zM351 278h9v6h-9zM351 296h9v6h-9zM351 314h9v6h-9zM351 422h9v6h-9zM351 428h9v6h-9zM360 215h9v6h-9zM369 148h9v6h-9zM369 280h9v6h-9zM369 412h9v6h-9zM378 149h10v6h-10zM378 185h10v6h-10zM378 377h10v6h-10zM378 401h10v6h-10zM378 437h10v6h-10zM388 219h9v6h-9zM388 255h9v6h-9zM388 369h9v6h-9zM388 429h9v6h-9z"/><path fill="#ff0000" d="M291 122h8v6h-8zM316 122h9v6h-9zM351 122h9v6h-9zM378 125h10v6h-10zM537 127h9v6h-9z"/><path fill="#ffff00" d="M291 128h8v6h-8zM308 130h8v6h-8zM316 493h9v6h-9zM325 495h9v6h-9zM334 130h9v6h-9zM369 494h9v6h-9zM388 129h9v6h-9zM454 494h9v6h-9zM463 131h9v6h-9zM537 151h9v6h-9zM537 163h9v6h-9zM537 187h9v6h-9zM537 193h9v6h-9zM537 217h9v6h-9zM537 241h9v6h-9zM537 259h9v6h-9zM537 265h9v6h-9zM537 277h9v6h-9zM537 289h9v6h-9zM537 313h9v6h-9zM537 319h9v6h-9zM537 361h9v6h-9zM537 373h9v6h-9zM537 403h9v6h-9zM537 439h9v6h-9zM537 463h9v6h-9zM537 469h9v6h-9zM537 475h9v6h-9zM546 253h9v6h-9zM546 289h9v6h-9zM546 295h9v6h-9zM546 301h9v6h-9zM546 361h9v6h-9zM546 385h9v6h-9zM546 391h9v6h-9zM546 433h9v6h-9zM546 439h9v6h-9zM555 289h10v6h-10zM555 295h10v6h-10zM555 475h10v6h-10z"/><path fill="#900000" d="M291 501h8v6h-8zM316 499h9v6h-9zM360 499h9v6h-9zM388 501h9v6h-9zM426 501h9v6h-9zM444 501h10v6h-10zM509 499h9v6h-9zM537 501h9v6h-9zM583 499h9v6h-9z"/><path fill="#ffff12" d="M291 495h8v6h-8zM308 493h8v6h-8zM316 128h9v6h-9zM351 128h9v6h-9zM360 493h9v6h-9zM435 495h9v6h-9zM481 131h10v6h-10zM528 139h9v6h-9zM528 175h9v6h-9zM528 193h9v6h-9zM528 241h9v6h-9zM528 265h9v6h-9zM528 271h9v6h-9zM528 319h9v6h-9zM528 331h9v6h-9zM528 349h9v6h-9zM528 361h9v6h-9zM528 397h9v6h-9zM528 409h9v6h-9zM528 415h9v6h-9zM528 421h9v6h-9zM528 463h9v6h-9zM528 475h9v6h-9zM528 493h9v1h-9z"/><path fill="#9c0000" d="M299 121h9v6h-9zM325 123h9v6h-9zM388 123h9v6h-9zM472 127h9v6h-9zM574 126h9v6h-9z"/><path fill="#b40000" d="M299 499h9v6h-9zM308 499h8v6h-8zM325 501h9v6h-9zM407 500h10v6h-10zM463 501h9v6h-9zM472 499h9v6h-9zM528 500h9v6h-9z"/><path fill="#fffc00" d="M299 493h9v6h-9zM426 495h9v6h-9zM537 169h9v6h-9zM537 295h9v6h-9zM537 385h9v6h-9zM546 163h9v6h-9zM546 169h9v6h-9zM546 247h9v6h-9zM546 277h9v6h-9zM546 409h9v6h-9zM546 421h9v6h-9zM546 445h9v6h-9zM555 181h10v6h-10zM555 235h10v6h-10zM555 301h10v6h-10zM555 319h10v6h-10zM555 343h10v6h-10zM555 409h10v6h-10zM555 427h10v6h-10z"/><path fill="#ea0000" d="M308 124h8v6h-8zM398 124h9v6h-9zM463 125h9v6h-9z"/><path fill="#3c0000" d="M325 112h9v11h-9zM444 507h10v6h-10z"/><path fill="#ff1200" d="M334 501h9v6h-9zM343 501h8v6h-8zM435 501h9v6h-9zM500 499h9v6h-9z"/><path fill="#ffff1e" d="M334 495h9v6h-9zM369 130h9v6h-9zM388 495h9v6h-9zM417 495h9v6h-9zM518 144h10v6h-10zM518 198h10v6h-10zM518 240h10v6h-10zM518 300h10v6h-10zM518 312h10v6h-10zM518 342h10v6h-10zM518 366h10v6h-10zM528 205h9v6h-9zM528 247h9v6h-9zM528 253h9v6h-9zM528 313h9v6h-9zM528 343h9v6h-9zM528 367h9v6h-9zM528 457h9v6h-9zM528 469h9v6h-9z"/><path fill="#540000" d="M343 122h8v6h-8zM417 125h9v6h-9zM426 125h9v6h-9zM444 126h10v6h-10zM454 124h9v6h-9zM491 125h9v6h-9zM528 127h9v6h-9zM546 127h9v6h-9z"/><path fill="#d20000" d="M351 499h9v6h-9zM360 125h9v6h-9zM454 500h9v6h-9zM481 125h10v6h-10zM481 499h10v6h-10zM491 501h9v6h-9z"/><path fill="#ffff06" d="M351 493h9v6h-9zM378 131h10v6h-10zM378 493h10v6h-10zM444 495h10v6h-10zM472 133h9v6h-9zM528 289h9v6h-9zM528 355h9v6h-9zM528 385h9v6h-9zM537 145h9v6h-9zM537 271h9v6h-9zM537 349h9v6h-9zM537 409h9v6h-9zM546 217h9v6h-9zM546 283h9v6h-9zM546 469h9v6h-9zM546 475h9v6h-9zM546 481h9v6h-9z"/><path fill="#ff1e00" d="M369 124h9v6h-9zM407 124h10v6h-10zM518 126h10v6h-10zM555 127h10v6h-10zM565 127h9v6h-9zM583 129h9v6h-9zM592 127h10v6h-10zM602 127h9v6h-9z"/><path fill="#6c0000" d="M378 499h10v6h-10zM518 501h10v6h-10zM555 501h10v6h-10zM565 499h9v6h-9zM602 500h9v6h-9z"/><path fill="#ffe400" d="M398 130h9v6h-9zM491 131h9v6h-9zM537 133h9v6h-9zM537 331h9v6h-9zM546 181h9v6h-9zM546 325h9v6h-9zM555 163h10v6h-10zM555 193h10v6h-10zM555 481h10v6h-10zM574 132h9v6h-9zM574 252h9v6h-9zM574 270h9v6h-9zM574 288h9v6h-9zM583 159h9v6h-9zM583 165h9v6h-9zM583 279h9v6h-9zM583 297h9v6h-9zM583 339h9v6h-9zM583 369h9v6h-9zM583 375h9v6h-9zM592 139h10v6h-10zM592 187h10v6h-10zM592 199h10v6h-10zM592 247h10v6h-10zM592 271h10v6h-10zM592 289h10v6h-10zM592 331h10v6h-10zM592 355h10v6h-10zM592 373h10v6h-10zM592 391h10v6h-10zM592 451h10v6h-10zM602 151h9v6h-9zM602 157h9v6h-9zM602 163h9v6h-9zM602 241h9v6h-9zM602 277h9v6h-9zM602 355h9v6h-9zM602 367h9v6h-9zM602 385h9v6h-9zM602 403h9v6h-9z"/><path fill="#ffffae" d="M398 136h9v6h-9zM398 142h9v6h-9zM398 190h9v6h-9zM398 220h9v6h-9zM398 232h9v6h-9zM398 304h9v6h-9zM398 346h9v6h-9zM398 352h9v6h-9zM398 370h9v6h-9zM398 376h9v6h-9zM398 406h9v6h-9zM407 196h10v6h-10zM407 286h10v6h-10zM407 298h10v6h-10zM407 304h10v6h-10zM407 322h10v6h-10zM407 394h10v6h-10zM407 406h10v6h-10zM407 424h10v6h-10zM407 442h10v6h-10zM407 448h10v6h-10zM407 454h10v6h-10zM407 460h10v6h-10zM417 275h9v6h-9zM417 353h9v6h-9zM417 449h9v6h-9zM417 455h9v6h-9z"/><path fill="#ffffa8" d="M398 148h9v6h-9zM398 160h9v6h-9zM398 172h9v6h-9zM398 178h9v6h-9zM398 202h9v6h-9zM398 250h9v6h-9zM398 256h9v6h-9zM398 262h9v6h-9zM398 316h9v6h-9zM398 334h9v6h-9zM398 340h9v6h-9zM398 364h9v6h-9zM398 382h9v6h-9zM398 394h9v6h-9zM398 412h9v6h-9zM398 436h9v6h-9zM398 490h9v4h-9zM407 154h10v6h-10zM407 160h10v6h-10zM407 166h10v6h-10zM407 232h10v6h-10zM407 250h10v6h-10zM407 310h10v6h-10zM407 316h10v6h-10zM407 340h10v6h-10zM407 352h10v6h-10zM407 358h10v6h-10zM407 370h10v6h-10zM407 382h10v6h-10zM407 430h10v6h-10zM407 436h10v6h-10zM407 466h10v6h-10zM407 490h10v4h-10zM417 149h9v6h-9zM417 155h9v6h-9zM417 161h9v6h-9zM417 173h9v6h-9zM417 269h9v6h-9zM417 287h9v6h-9zM417 299h9v6h-9zM417 311h9v6h-9zM417 323h9v6h-9zM417 335h9v6h-9zM417 389h9v6h-9zM417 395h9v6h-9zM417 431h9v6h-9zM417 479h9v6h-9zM417 485h9v6h-9z"/><path fill="#ffffb4" d="M398 154h9v6h-9zM398 166h9v6h-9zM398 274h9v6h-9zM398 286h9v6h-9zM398 298h9v6h-9zM398 328h9v6h-9zM398 358h9v6h-9zM398 400h9v6h-9zM398 418h9v6h-9zM398 424h9v6h-9zM398 430h9v6h-9zM398 466h9v6h-9zM398 478h9v6h-9zM407 136h10v6h-10zM407 148h10v6h-10zM407 178h10v6h-10zM407 184h10v6h-10zM407 190h10v6h-10zM407 208h10v6h-10zM407 220h10v6h-10zM407 238h10v6h-10zM407 274h10v6h-10zM407 280h10v6h-10zM407 418h10v6h-10zM407 472h10v6h-10zM407 478h10v6h-10zM407 484h10v6h-10z"/><path fill="#ffffa2" d="M398 184h9v6h-9zM398 208h9v6h-9zM398 472h9v6h-9zM407 172h10v6h-10zM407 214h10v6h-10zM407 226h10v6h-10zM407 244h10v6h-10zM407 268h10v6h-10zM407 292h10v6h-10zM407 334h10v6h-10zM407 364h10v6h-10zM407 376h10v6h-10zM407 388h10v6h-10zM417 167h9v6h-9zM417 185h9v6h-9zM417 227h9v6h-9zM417 233h9v6h-9zM417 281h9v6h-9zM417 317h9v6h-9zM417 347h9v6h-9zM417 413h9v6h-9zM426 137h9v6h-9zM426 143h9v6h-9zM426 167h9v6h-9zM426 185h9v6h-9zM426 197h9v6h-9zM426 221h9v6h-9zM426 293h9v6h-9zM426 299h9v6h-9zM426 341h9v6h-9zM426 353h9v6h-9zM426 395h9v6h-9zM426 437h9v6h-9zM426 449h9v6h-9zM426 467h9v6h-9zM426 491h9v4h-9z"/><path fill="#ffffba" d="M398 196h9v6h-9zM398 226h9v6h-9zM398 238h9v6h-9zM398 268h9v6h-9zM398 292h9v6h-9zM398 310h9v6h-9zM398 388h9v6h-9zM398 454h9v6h-9zM398 484h9v6h-9z"/><path fill="#ffffc0" d="M398 214h9v6h-9zM398 244h9v6h-9zM398 280h9v6h-9zM398 322h9v6h-9zM398 442h9v6h-9zM398 448h9v6h-9zM398 460h9v6h-9z"/><path fill="#ff7800" d="M407 130h10v6h-10zM583 135h9v6h-9z"/><path fill="#fff600" d="M407 494h10v6h-10zM537 205h9v6h-9zM537 247h9v6h-9zM537 253h9v6h-9zM537 307h9v6h-9zM537 325h9v6h-9zM537 337h9v6h-9zM537 355h9v6h-9zM537 445h9v6h-9zM537 481h9v6h-9zM546 145h9v6h-9zM546 175h9v6h-9zM546 193h9v6h-9zM546 229h9v6h-9zM546 235h9v6h-9zM546 241h9v6h-9zM546 265h9v6h-9zM546 307h9v6h-9zM546 331h9v6h-9zM546 337h9v6h-9zM546 343h9v6h-9zM546 349h9v6h-9zM546 355h9v6h-9zM546 397h9v6h-9zM546 415h9v6h-9zM546 451h9v6h-9zM546 463h9v6h-9zM555 169h10v6h-10zM555 229h10v6h-10zM555 241h10v6h-10zM555 265h10v6h-10zM555 271h10v6h-10zM555 325h10v6h-10zM555 349h10v6h-10zM555 355h10v6h-10zM555 403h10v6h-10zM555 415h10v6h-10zM555 421h10v6h-10zM555 439h10v6h-10zM555 469h10v6h-10zM565 175h9v6h-9zM565 253h9v6h-9zM565 289h9v6h-9zM565 313h9v6h-9zM565 421h9v6h-9zM565 439h9v6h-9zM574 324h9v6h-9zM574 378h9v6h-9zM574 384h9v6h-9zM574 444h9v6h-9z"/><path fill="#ffff9c" d="M407 142h10v6h-10zM407 202h10v6h-10zM407 256h10v6h-10zM407 262h10v6h-10zM407 328h10v6h-10zM407 346h10v6h-10zM407 400h10v6h-10zM407 412h10v6h-10zM417 137h9v6h-9zM417 179h9v6h-9zM417 203h9v6h-9zM417 209h9v6h-9zM417 215h9v6h-9zM417 245h9v6h-9zM417 251h9v6h-9zM417 293h9v6h-9zM417 371h9v6h-9zM417 377h9v6h-9zM417 401h9v6h-9zM417 407h9v6h-9zM417 437h9v6h-9zM417 443h9v6h-9zM417 461h9v6h-9zM417 473h9v6h-9zM426 149h9v6h-9zM426 161h9v6h-9zM426 203h9v6h-9zM426 233h9v6h-9zM426 245h9v6h-9zM426 269h9v6h-9zM426 323h9v6h-9zM426 413h9v6h-9zM426 425h9v6h-9zM426 443h9v6h-9zM426 485h9v6h-9zM435 233h9v6h-9zM435 461h9v6h-9z"/><path fill="#fff000" d="M417 131h9v6h-9zM463 495h9v6h-9zM546 494h9v6h-9zM546 187h9v6h-9zM555 139h10v6h-10zM555 205h10v6h-10zM555 211h10v6h-10zM555 217h10v6h-10zM555 367h10v6h-10zM555 397h10v6h-10zM565 145h9v6h-9zM565 151h9v6h-9zM565 169h9v6h-9zM565 193h9v6h-9zM565 247h9v6h-9zM565 271h9v6h-9zM565 283h9v6h-9zM565 337h9v6h-9zM565 343h9v6h-9zM565 361h9v6h-9zM565 379h9v6h-9zM565 385h9v6h-9zM565 451h9v6h-9zM565 481h9v6h-9zM574 198h9v6h-9zM574 210h9v6h-9zM574 216h9v6h-9zM574 240h9v6h-9zM574 258h9v6h-9zM574 312h9v6h-9zM574 330h9v6h-9zM574 336h9v6h-9zM574 342h9v6h-9zM574 360h9v6h-9zM574 396h9v6h-9zM574 414h9v6h-9zM574 432h9v6h-9zM574 468h9v6h-9zM574 492h9v3h-9zM583 493h9v6h-9zM583 291h9v6h-9zM583 423h9v6h-9zM583 483h9v6h-9zM602 229h9v6h-9zM602 253h9v6h-9zM602 325h9v6h-9zM602 337h9v6h-9zM602 343h9v6h-9zM602 373h9v6h-9zM602 421h9v6h-9zM602 451h9v6h-9z"/><path fill="#ffff90" d="M417 143h9v6h-9zM417 191h9v6h-9zM417 221h9v6h-9zM417 263h9v6h-9zM417 359h9v6h-9zM417 383h9v6h-9zM417 419h9v6h-9zM417 425h9v6h-9zM426 155h9v6h-9zM426 173h9v6h-9zM426 191h9v6h-9zM426 239h9v6h-9zM426 257h9v6h-9zM426 263h9v6h-9zM426 311h9v6h-9zM426 401h9v6h-9zM435 137h9v6h-9zM435 143h9v6h-9zM435 167h9v6h-9zM435 173h9v6h-9zM435 185h9v6h-9zM435 191h9v6h-9zM435 203h9v6h-9zM435 215h9v6h-9zM435 263h9v6h-9zM435 269h9v6h-9zM435 287h9v6h-9zM435 317h9v6h-9zM435 323h9v6h-9zM435 329h9v6h-9zM435 335h9v6h-9zM435 353h9v6h-9zM435 389h9v6h-9zM435 419h9v6h-9zM435 425h9v6h-9zM435 449h9v6h-9zM435 455h9v6h-9zM435 479h9v6h-9zM444 138h10v6h-10zM444 144h10v6h-10zM444 162h10v6h-10zM444 216h10v6h-10zM444 222h10v6h-10zM444 246h10v6h-10zM444 264h10v6h-10zM444 270h10v6h-10zM444 276h10v6h-10zM444 294h10v6h-10zM444 420h10v6h-10z"/><path fill="#ffff96" d="M417 197h9v6h-9zM417 239h9v6h-9zM417 257h9v6h-9zM417 305h9v6h-9zM417 329h9v6h-9zM417 341h9v6h-9zM417 365h9v6h-9zM417 467h9v6h-9zM417 491h9v4h-9zM426 179h9v6h-9zM426 209h9v6h-9zM426 251h9v6h-9zM426 275h9v6h-9zM426 287h9v6h-9zM426 329h9v6h-9zM426 365h9v6h-9zM426 371h9v6h-9zM426 377h9v6h-9zM426 383h9v6h-9zM426 455h9v6h-9zM435 149h9v6h-9zM435 209h9v6h-9zM435 251h9v6h-9zM435 275h9v6h-9zM435 293h9v6h-9zM435 359h9v6h-9zM435 365h9v6h-9zM435 371h9v6h-9zM435 377h9v6h-9zM435 473h9v6h-9zM435 491h9v4h-9z"/><path fill="#ffb400" d="M426 131h9v6h-9z"/><path fill="#ffff8a" d="M426 215h9v6h-9zM426 227h9v6h-9zM426 281h9v6h-9zM426 305h9v6h-9zM426 317h9v6h-9zM426 335h9v6h-9zM426 347h9v6h-9zM426 359h9v6h-9zM426 389h9v6h-9zM426 407h9v6h-9zM426 419h9v6h-9zM426 431h9v6h-9zM426 461h9v6h-9zM426 473h9v6h-9zM426 479h9v6h-9zM435 161h9v6h-9zM435 245h9v6h-9zM435 257h9v6h-9zM435 281h9v6h-9zM435 347h9v6h-9zM435 383h9v6h-9zM435 395h9v6h-9zM435 401h9v6h-9zM435 413h9v6h-9zM435 431h9v6h-9zM435 437h9v6h-9zM435 443h9v6h-9zM444 150h10v6h-10zM444 156h10v6h-10zM444 186h10v6h-10zM444 252h10v6h-10zM444 288h10v6h-10zM444 330h10v6h-10zM444 336h10v6h-10zM444 360h10v6h-10zM444 438h10v6h-10zM444 480h10v6h-10zM444 486h10v6h-10z"/><path fill="#ff8400" d="M435 131h9v6h-9zM518 132h10v6h-10zM546 133h9v6h-9z"/><path fill="#ffff84" d="M435 155h9v6h-9zM435 179h9v6h-9zM435 197h9v6h-9zM435 221h9v6h-9zM435 227h9v6h-9zM435 305h9v6h-9zM435 311h9v6h-9zM435 407h9v6h-9zM435 467h9v6h-9zM435 485h9v6h-9zM444 168h10v6h-10zM444 240h10v6h-10zM444 258h10v6h-10zM444 342h10v6h-10zM444 354h10v6h-10zM444 366h10v6h-10zM444 372h10v6h-10zM444 378h10v6h-10zM444 390h10v6h-10zM444 396h10v6h-10zM444 426h10v6h-10zM444 432h10v6h-10zM444 444h10v6h-10zM444 450h10v6h-10zM444 456h10v6h-10zM454 274h9v6h-9zM454 334h9v6h-9zM454 352h9v6h-9zM454 376h9v6h-9zM454 382h9v6h-9z"/><path fill="#ffff7e" d="M435 239h9v6h-9zM435 299h9v6h-9zM435 341h9v6h-9zM444 174h10v6h-10zM444 192h10v6h-10zM444 210h10v6h-10zM444 306h10v6h-10zM444 318h10v6h-10zM444 324h10v6h-10zM444 348h10v6h-10zM444 402h10v6h-10zM444 414h10v6h-10zM454 136h9v6h-9zM454 214h9v6h-9zM454 226h9v6h-9zM454 232h9v6h-9zM454 256h9v6h-9zM454 316h9v6h-9zM454 328h9v6h-9zM454 346h9v6h-9zM454 364h9v6h-9zM454 370h9v6h-9zM454 394h9v6h-9zM454 472h9v6h-9zM463 365h9v6h-9zM463 461h9v6h-9z"/><path fill="#ff9000" d="M444 132h10v6h-10zM509 493h9v6h-9z"/><path fill="#ffff78" d="M444 180h10v6h-10zM444 198h10v6h-10zM444 204h10v6h-10zM444 228h10v6h-10zM444 234h10v6h-10zM444 282h10v6h-10zM444 300h10v6h-10zM444 312h10v6h-10zM444 384h10v6h-10zM444 408h10v6h-10zM444 462h10v6h-10zM444 468h10v6h-10zM444 474h10v6h-10zM444 492h10v3h-10zM454 142h9v6h-9zM454 154h9v6h-9zM454 178h9v6h-9zM454 196h9v6h-9zM454 202h9v6h-9zM454 262h9v6h-9zM454 322h9v6h-9zM454 406h9v6h-9zM454 436h9v6h-9zM454 454h9v6h-9zM454 460h9v6h-9zM463 209h9v6h-9zM463 251h9v6h-9zM463 269h9v6h-9zM463 275h9v6h-9zM463 311h9v6h-9zM463 317h9v6h-9zM463 329h9v6h-9zM463 455h9v6h-9zM463 479h9v6h-9z"/><path fill="#ff8a00" d="M454 130h9v6h-9zM555 495h10v6h-10z"/><path fill="#4e0000" d="M454 506h9v6h-9z"/><path fill="#ffff6c" d="M454 148h9v6h-9zM454 166h9v6h-9zM454 172h9v6h-9zM454 184h9v6h-9zM454 208h9v6h-9zM454 238h9v6h-9zM454 304h9v6h-9zM454 310h9v6h-9zM454 400h9v6h-9zM454 418h9v6h-9zM454 448h9v6h-9zM454 466h9v6h-9zM454 484h9v6h-9zM463 137h9v6h-9zM463 143h9v6h-9zM463 155h9v6h-9zM463 167h9v6h-9zM463 179h9v6h-9zM463 185h9v6h-9zM463 203h9v6h-9zM463 239h9v6h-9zM463 257h9v6h-9zM463 293h9v6h-9zM463 299h9v6h-9zM463 323h9v6h-9zM463 347h9v6h-9zM463 359h9v6h-9zM463 413h9v6h-9zM463 425h9v6h-9zM463 467h9v6h-9zM463 473h9v6h-9zM472 151h9v6h-9zM472 217h9v6h-9zM472 235h9v6h-9zM472 253h9v6h-9zM472 259h9v6h-9zM472 283h9v6h-9zM472 295h9v6h-9zM472 307h9v6h-9zM472 325h9v6h-9zM472 331h9v6h-9zM472 337h9v6h-9zM472 355h9v6h-9zM472 367h9v6h-9zM472 373h9v6h-9zM472 481h9v6h-9z"/><path fill="#ffff72" d="M454 160h9v6h-9zM454 190h9v6h-9zM454 220h9v6h-9zM454 244h9v6h-9zM454 250h9v6h-9zM454 268h9v6h-9zM454 280h9v6h-9zM454 286h9v6h-9zM454 292h9v6h-9zM454 298h9v6h-9zM454 340h9v6h-9zM454 358h9v6h-9zM454 388h9v6h-9zM454 412h9v6h-9zM454 424h9v6h-9zM454 430h9v6h-9zM454 442h9v6h-9zM454 478h9v6h-9zM454 490h9v4h-9zM463 173h9v6h-9zM463 215h9v6h-9zM463 227h9v6h-9zM463 245h9v6h-9zM463 263h9v6h-9zM463 281h9v6h-9zM463 287h9v6h-9zM463 389h9v6h-9zM463 407h9v6h-9zM463 431h9v6h-9zM463 437h9v6h-9zM463 443h9v6h-9zM463 449h9v6h-9zM463 491h9v4h-9zM472 421h9v6h-9zM472 427h9v6h-9zM472 463h9v6h-9zM472 469h9v6h-9z"/><path fill="#ffff60" d="M463 149h9v6h-9zM463 161h9v6h-9zM463 197h9v6h-9zM463 335h9v6h-9zM463 401h9v6h-9zM472 139h9v6h-9zM472 145h9v6h-9zM472 175h9v6h-9zM472 229h9v6h-9zM472 241h9v6h-9zM472 289h9v6h-9zM472 313h9v6h-9zM472 319h9v6h-9zM472 349h9v6h-9zM472 385h9v6h-9zM472 445h9v6h-9zM472 457h9v6h-9zM481 155h10v6h-10zM481 161h10v6h-10zM481 185h10v6h-10zM481 203h10v6h-10zM481 215h10v6h-10zM481 377h10v6h-10zM481 395h10v6h-10zM481 443h10v6h-10zM481 461h10v6h-10zM481 467h10v6h-10z"/><path fill="#ffff66" d="M463 191h9v6h-9zM463 221h9v6h-9zM463 233h9v6h-9zM463 305h9v6h-9zM463 341h9v6h-9zM463 353h9v6h-9zM463 371h9v6h-9zM463 377h9v6h-9zM463 383h9v6h-9zM463 395h9v6h-9zM463 419h9v6h-9zM463 485h9v6h-9zM472 157h9v6h-9zM472 187h9v6h-9zM472 277h9v6h-9zM472 343h9v6h-9zM472 361h9v6h-9zM472 391h9v6h-9zM472 415h9v6h-9zM472 439h9v6h-9zM472 451h9v6h-9zM481 191h10v6h-10zM481 239h10v6h-10zM481 335h10v6h-10zM481 365h10v6h-10zM481 437h10v6h-10zM481 449h10v6h-10z"/><path fill="#ffa800" d="M472 493h9v6h-9zM518 495h10v6h-10zM602 133h9v6h-9z"/><path fill="#ffff5a" d="M472 163h9v6h-9zM472 169h9v6h-9zM472 181h9v6h-9zM472 193h9v6h-9zM472 199h9v6h-9zM472 205h9v6h-9zM472 211h9v6h-9zM472 223h9v6h-9zM472 247h9v6h-9zM472 265h9v6h-9zM472 271h9v6h-9zM472 301h9v6h-9zM472 379h9v6h-9zM472 397h9v6h-9zM472 403h9v6h-9zM472 433h9v6h-9zM472 487h9v6h-9zM481 137h10v6h-10zM481 179h10v6h-10zM481 209h10v6h-10zM481 251h10v6h-10zM481 275h10v6h-10zM481 287h10v6h-10zM481 305h10v6h-10zM481 359h10v6h-10zM481 383h10v6h-10zM481 413h10v6h-10zM481 419h10v6h-10zM481 425h10v6h-10zM491 185h9v6h-9zM491 197h9v6h-9zM491 221h9v6h-9zM491 293h9v6h-9zM491 407h9v6h-9zM491 443h9v6h-9zM491 455h9v6h-9z"/><path fill="#ffff54" d="M472 409h9v6h-9zM472 475h9v6h-9zM481 143h10v6h-10zM481 149h10v6h-10zM481 167h10v6h-10zM481 173h10v6h-10zM481 197h10v6h-10zM481 245h10v6h-10zM481 263h10v6h-10zM481 293h10v6h-10zM481 311h10v6h-10zM481 317h10v6h-10zM481 341h10v6h-10zM481 389h10v6h-10zM481 401h10v6h-10zM481 431h10v6h-10zM481 455h10v6h-10zM491 143h9v6h-9zM491 149h9v6h-9zM491 155h9v6h-9zM491 167h9v6h-9zM491 173h9v6h-9zM491 179h9v6h-9zM491 209h9v6h-9zM491 263h9v6h-9zM491 317h9v6h-9zM491 329h9v6h-9zM491 341h9v6h-9zM491 419h9v6h-9zM491 431h9v6h-9zM491 473h9v6h-9zM491 491h9v4h-9z"/><path fill="#ffa200" d="M481 493h10v6h-10z"/><path fill="#ffff4e" d="M481 221h10v6h-10zM481 227h10v6h-10zM481 233h10v6h-10zM481 257h10v6h-10zM481 281h10v6h-10zM481 299h10v6h-10zM481 323h10v6h-10zM481 329h10v6h-10zM481 347h10v6h-10zM481 353h10v6h-10zM481 371h10v6h-10zM481 407h10v6h-10zM481 473h10v6h-10zM481 485h10v6h-10zM481 491h10v2h-10zM491 137h9v6h-9zM491 233h9v6h-9zM491 257h9v6h-9zM491 275h9v6h-9zM491 335h9v6h-9zM491 383h9v6h-9zM491 401h9v6h-9zM500 150h9v6h-9zM500 276h9v6h-9zM500 294h9v6h-9zM500 318h9v6h-9zM500 342h9v6h-9zM500 372h9v6h-9zM500 396h9v6h-9z"/><path fill="#ffff48" d="M481 269h10v6h-10zM481 479h10v6h-10zM491 161h9v6h-9zM491 203h9v6h-9zM491 215h9v6h-9zM491 245h9v6h-9zM491 251h9v6h-9zM491 269h9v6h-9zM491 281h9v6h-9zM491 287h9v6h-9zM491 299h9v6h-9zM491 311h9v6h-9zM491 365h9v6h-9zM491 371h9v6h-9zM491 389h9v6h-9zM491 395h9v6h-9zM491 425h9v6h-9zM491 449h9v6h-9zM491 467h9v6h-9zM491 485h9v6h-9zM500 156h9v6h-9zM500 186h9v6h-9zM500 192h9v6h-9zM500 300h9v6h-9zM500 312h9v6h-9zM500 330h9v6h-9zM500 360h9v6h-9zM500 378h9v6h-9zM500 384h9v6h-9zM500 408h9v6h-9zM500 414h9v6h-9zM500 426h9v6h-9zM500 444h9v6h-9zM500 480h9v6h-9z"/><path fill="#300000" d="M491 507h9v6h-9z"/><path fill="#ffd200" d="M491 495h9v6h-9zM528 494h9v6h-9zM565 295h9v6h-9zM565 301h9v6h-9zM574 174h9v6h-9zM574 228h9v6h-9zM574 438h9v6h-9zM583 477h9v6h-9zM592 175h10v6h-10zM592 409h10v6h-10zM592 421h10v6h-10zM592 469h10v6h-10zM592 475h10v6h-10zM602 265h9v6h-9z"/><path fill="#ffff42" d="M491 191h9v6h-9zM491 239h9v6h-9zM491 305h9v6h-9zM491 323h9v6h-9zM491 347h9v6h-9zM491 353h9v6h-9zM491 359h9v6h-9zM491 413h9v6h-9zM491 437h9v6h-9zM491 461h9v6h-9zM491 479h9v6h-9zM500 144h9v6h-9zM500 162h9v6h-9zM500 168h9v6h-9zM500 174h9v6h-9zM500 198h9v6h-9zM500 204h9v6h-9zM500 228h9v6h-9zM500 234h9v6h-9zM500 240h9v6h-9zM500 252h9v6h-9zM500 264h9v6h-9zM500 270h9v6h-9zM500 288h9v6h-9zM500 348h9v6h-9zM500 366h9v6h-9zM500 390h9v6h-9zM500 432h9v6h-9zM500 438h9v6h-9zM500 462h9v6h-9zM500 474h9v6h-9zM500 486h9v6h-9zM509 138h9v6h-9zM509 144h9v6h-9zM509 222h9v6h-9zM509 228h9v6h-9zM509 240h9v6h-9zM509 270h9v6h-9zM509 474h9v6h-9z"/><path fill="#ffff3c" d="M491 227h9v6h-9zM491 377h9v6h-9zM500 210h9v6h-9zM500 216h9v6h-9zM500 258h9v6h-9zM500 306h9v6h-9zM500 324h9v6h-9zM500 420h9v6h-9zM500 456h9v6h-9zM500 492h9v1h-9zM509 252h9v6h-9zM509 258h9v6h-9zM509 264h9v6h-9zM509 294h9v6h-9zM509 366h9v6h-9zM509 372h9v6h-9zM509 378h9v6h-9zM509 468h9v6h-9z"/><path fill="#ffc000" d="M500 132h9v6h-9zM574 495h9v6h-9zM574 222h9v6h-9zM583 261h9v6h-9zM592 181h10v6h-10zM592 193h10v6h-10zM592 427h10v6h-10z"/><path fill="#ffae00" d="M500 493h9v6h-9z"/><path fill="#ffff36" d="M500 138h9v6h-9zM500 180h9v6h-9zM500 222h9v6h-9zM500 246h9v6h-9zM500 282h9v6h-9zM500 336h9v6h-9zM500 354h9v6h-9zM500 402h9v6h-9zM500 450h9v6h-9zM500 468h9v6h-9zM509 168h9v6h-9zM509 180h9v6h-9zM509 192h9v6h-9zM509 204h9v6h-9zM509 210h9v6h-9zM509 234h9v6h-9zM509 276h9v6h-9zM509 306h9v6h-9zM509 336h9v6h-9zM509 408h9v6h-9zM509 438h9v6h-9zM509 450h9v6h-9zM509 486h9v6h-9zM518 390h10v6h-10z"/><path fill="#ffff2a" d="M509 150h9v6h-9zM509 198h9v6h-9zM509 282h9v6h-9zM509 288h9v6h-9zM509 300h9v6h-9zM509 324h9v6h-9zM509 354h9v6h-9zM509 360h9v6h-9zM509 384h9v6h-9zM509 390h9v6h-9zM509 420h9v6h-9zM509 426h9v6h-9zM509 432h9v6h-9zM509 456h9v6h-9zM509 462h9v6h-9zM509 480h9v6h-9zM509 492h9v1h-9zM518 138h10v6h-10zM518 150h10v6h-10zM518 162h10v6h-10zM518 180h10v6h-10zM518 216h10v6h-10zM518 228h10v6h-10zM518 264h10v6h-10zM518 270h10v6h-10zM518 294h10v6h-10zM518 330h10v6h-10zM518 396h10v6h-10zM518 420h10v6h-10zM518 468h10v6h-10zM518 486h10v6h-10z"/><path fill="#ffff30" d="M509 156h9v6h-9zM509 162h9v6h-9zM509 186h9v6h-9zM509 216h9v6h-9zM509 246h9v6h-9zM509 318h9v6h-9zM509 330h9v6h-9zM509 342h9v6h-9zM509 396h9v6h-9zM509 402h9v6h-9zM509 414h9v6h-9zM509 444h9v6h-9zM518 186h10v6h-10zM518 210h10v6h-10zM518 246h10v6h-10zM518 276h10v6h-10zM518 282h10v6h-10zM518 288h10v6h-10zM518 354h10v6h-10zM518 402h10v6h-10zM518 408h10v6h-10zM518 432h10v6h-10zM518 450h10v6h-10zM518 462h10v6h-10zM518 474h10v6h-10zM518 480h10v6h-10zM518 492h10v3h-10z"/><path fill="#ffff24" d="M509 174h9v6h-9zM509 312h9v6h-9zM509 348h9v6h-9zM518 174h10v6h-10zM518 192h10v6h-10zM518 234h10v6h-10zM518 318h10v6h-10zM518 324h10v6h-10zM518 360h10v6h-10zM518 372h10v6h-10zM518 414h10v6h-10zM518 426h10v6h-10zM518 438h10v6h-10z"/><path fill="#ff7e00" d="M528 133h9v6h-9z"/><path fill="#fff612" d="M528 151h9v6h-9zM528 169h9v6h-9zM528 229h9v6h-9zM528 301h9v6h-9z"/><path fill="#fff60c" d="M528 157h9v6h-9zM537 181h9v6h-9zM537 415h9v6h-9zM537 421h9v6h-9zM537 427h9v6h-9zM546 151h9v6h-9zM546 205h9v6h-9zM546 211h9v6h-9zM546 223h9v6h-9zM546 259h9v6h-9zM546 367h9v6h-9zM546 373h9v6h-9zM546 493h9v1h-9zM555 247h10v6h-10zM555 253h10v6h-10zM555 277h10v6h-10zM555 445h10v6h-10zM555 463h10v6h-10zM565 211h9v6h-9zM565 277h9v6h-9zM565 367h9v6h-9zM565 409h9v6h-9z"/><path fill="#fff61e" d="M528 181h9v6h-9zM528 277h9v6h-9zM528 373h9v6h-9zM528 403h9v6h-9z"/><path fill="#fff024" d="M528 199h9v6h-9z"/><path fill="#fffc18" d="M528 259h9v6h-9zM528 433h9v6h-9zM528 481h9v6h-9z"/><path fill="#fffc12" d="M528 295h9v6h-9z"/><path fill="#fff624" d="M528 307h9v6h-9z"/><path fill="#fffc06" d="M528 337h9v6h-9zM537 157h9v6h-9zM537 223h9v6h-9zM537 229h9v6h-9zM537 367h9v6h-9zM537 487h9v6h-9z"/><path fill="#fff618" d="M528 391h9v6h-9z"/><path fill="#fffc1e" d="M528 445h9v6h-9z"/><path fill="#ffde00" d="M537 495h9v6h-9zM546 403h9v6h-9zM555 451h10v6h-10zM565 493h9v6h-9zM565 349h9v6h-9zM565 469h9v6h-9zM574 318h9v6h-9zM583 237h9v6h-9zM583 429h9v6h-9zM592 157h10v6h-10zM592 223h10v6h-10zM592 397h10v6h-10zM602 145h9v6h-9z"/><path fill="#fff606" d="M537 139h9v6h-9zM537 175h9v6h-9zM537 199h9v6h-9zM537 211h9v6h-9zM537 235h9v6h-9zM537 493h9v2h-9zM546 319h9v6h-9zM546 379h9v6h-9zM546 487h9v6h-9zM555 145h10v6h-10zM555 151h10v6h-10zM555 361h10v6h-10zM555 385h10v6h-10zM555 457h10v6h-10zM555 493h10v2h-10zM565 331h9v6h-9zM565 373h9v6h-9z"/><path fill="#ffd206" d="M537 283h9v6h-9zM555 379h10v6h-10zM574 300h9v6h-9zM583 189h9v6h-9zM583 471h9v6h-9zM592 325h10v6h-10zM602 487h9v6h-9z"/><path fill="#ffd800" d="M537 457h9v6h-9zM546 427h9v6h-9zM574 294h9v6h-9zM574 402h9v6h-9zM574 450h9v6h-9zM583 147h9v6h-9zM583 231h9v6h-9zM583 417h9v6h-9zM583 447h9v6h-9zM583 465h9v6h-9zM592 379h10v6h-10zM602 169h9v6h-9zM602 289h9v6h-9zM602 457h9v6h-9zM602 463h9v6h-9z"/><path fill="#ffd806" d="M546 139h9v6h-9zM555 187h10v6h-10zM574 144h9v6h-9zM574 192h9v6h-9zM592 385h10v6h-10zM602 205h9v6h-9zM602 409h9v6h-9z"/><path fill="#fffc0c" d="M546 271h9v6h-9zM546 457h9v6h-9zM555 259h10v6h-10zM555 373h10v6h-10z"/><path fill="#ffe406" d="M546 313h9v6h-9zM555 307h10v6h-10zM583 267h9v6h-9zM592 163h10v6h-10zM592 265h10v6h-10zM592 403h10v6h-10zM592 487h10v6h-10zM602 181h9v6h-9z"/><path fill="#fff006" d="M555 157h10v6h-10zM555 175h10v6h-10zM555 199h10v6h-10zM555 337h10v6h-10zM555 487h10v6h-10zM565 139h9v6h-9zM565 187h9v6h-9zM565 223h9v6h-9zM565 241h9v6h-9zM565 265h9v6h-9zM565 325h9v6h-9zM565 415h9v6h-9zM565 457h9v6h-9zM574 264h9v6h-9zM574 354h9v6h-9zM574 372h9v6h-9zM574 456h9v6h-9zM583 207h9v6h-9zM583 351h9v6h-9zM583 387h9v6h-9z"/><path fill="#ffd20c" d="M555 223h10v6h-10zM592 169h10v6h-10zM592 253h10v6h-10zM592 367h10v6h-10zM602 439h9v6h-9z"/><path fill="#ffea00" d="M555 283h10v6h-10zM565 133h9v6h-9zM565 163h9v6h-9zM565 199h9v6h-9zM565 307h9v6h-9zM565 397h9v6h-9zM574 150h9v6h-9zM574 156h9v6h-9zM574 162h9v6h-9zM574 180h9v6h-9zM574 186h9v6h-9zM574 246h9v6h-9zM574 276h9v6h-9zM574 306h9v6h-9zM574 408h9v6h-9zM574 462h9v6h-9zM574 486h9v6h-9zM583 141h9v6h-9zM583 177h9v6h-9zM583 195h9v6h-9zM583 213h9v6h-9zM583 225h9v6h-9zM583 243h9v6h-9zM583 249h9v6h-9zM583 273h9v6h-9zM583 303h9v6h-9zM583 327h9v6h-9zM583 363h9v6h-9zM583 381h9v6h-9zM583 393h9v6h-9zM583 399h9v6h-9zM583 405h9v6h-9zM583 453h9v6h-9zM583 459h9v6h-9zM592 259h10v6h-10zM592 337h10v6h-10zM592 343h10v6h-10zM592 439h10v6h-10zM592 457h10v6h-10zM592 463h10v6h-10zM592 481h10v6h-10zM602 187h9v6h-9zM602 235h9v6h-9zM602 319h9v6h-9zM602 349h9v6h-9zM602 361h9v6h-9zM602 415h9v6h-9z"/><path fill="#ffe40c" d="M555 391h10v6h-10zM565 319h9v6h-9zM565 427h9v6h-9zM574 168h9v6h-9zM583 183h9v6h-9zM592 235h10v6h-10zM602 469h9v6h-9z"/><path fill="#fff00c" d="M555 433h10v6h-10zM565 235h9v6h-9zM565 433h9v6h-9zM565 445h9v6h-9zM565 463h9v6h-9zM574 204h9v6h-9zM574 390h9v6h-9zM583 489h9v4h-9zM602 199h9v6h-9zM602 223h9v6h-9zM602 391h9v6h-9zM602 433h9v6h-9z"/><path fill="#ffea06" d="M565 157h9v6h-9zM565 181h9v6h-9zM565 205h9v6h-9zM565 229h9v6h-9zM565 259h9v6h-9zM565 391h9v6h-9zM574 366h9v6h-9zM574 426h9v6h-9zM574 474h9v6h-9zM583 171h9v6h-9zM583 219h9v6h-9zM583 345h9v6h-9zM583 411h9v6h-9zM583 441h9v6h-9zM602 175h9v6h-9zM602 247h9v6h-9zM602 283h9v6h-9zM602 379h9v6h-9zM602 397h9v6h-9zM602 493h9v1h-9z"/><path fill="#ffcc00" d="M565 217h9v6h-9zM565 355h9v6h-9zM574 348h9v6h-9zM592 493h10v6h-10zM592 205h10v6h-10zM592 283h10v6h-10zM592 313h10v6h-10zM592 349h10v6h-10zM592 415h10v6h-10zM602 139h9v6h-9zM602 331h9v6h-9z"/><path fill="#ffcc06" d="M565 403h9v6h-9zM565 487h9v6h-9zM592 277h10v6h-10zM592 319h10v6h-10zM602 307h9v6h-9z"/><path fill="#ffde0c" d="M565 475h9v6h-9z"/><path fill="#ffde06" d="M574 138h9v6h-9zM583 435h9v6h-9zM592 145h10v6h-10zM592 241h10v6h-10zM602 271h9v6h-9zM602 313h9v6h-9z"/><path fill="#ffea0c" d="M574 234h9v6h-9zM574 420h9v6h-9zM574 480h9v6h-9zM583 333h9v6h-9zM592 445h10v6h-10z"/><path fill="#ffc600" d="M574 282h9v6h-9zM583 153h9v6h-9zM583 201h9v6h-9zM583 309h9v6h-9zM583 357h9v6h-9zM592 211h10v6h-10zM592 217h10v6h-10zM592 301h10v6h-10zM592 433h10v6h-10zM602 494h9v6h-9zM602 193h9v6h-9zM602 445h9v6h-9zM602 475h9v6h-9z"/><path fill="#ffc00c" d="M583 255h9v6h-9zM592 229h10v6h-10z"/><path fill="#ffc606" d="M583 285h9v6h-9zM592 151h10v6h-10zM602 427h9v6h-9z"/><path fill="#ffcc0c" d="M583 315h9v6h-9zM602 301h9v6h-9zM602 481h9v6h-9z"/><path fill="#ffd80c" d="M583 321h9v6h-9zM592 295h10v6h-10zM592 307h10v6h-10zM602 211h9v6h-9zM602 217h9v6h-9zM602 259h9v6h-9z"/><path fill="#ff9c00" d="M592 133h10v6h-10z"/><path fill="#360000" d="M592 505h10v6h-10z"/><path fill="#ffc60c" d="M592 361h10v6h-10zM602 295h9v6h-9z"/><path fill="#fffff2" d="M445 285h9v6h-9z"/><path fill="#ffffc8" d="M435 281h10v13h-10z"/><path fill="#ffffb0" d="M445 279h9v6h-9zM445 291h9v6h-9z"/></svg>
<div class="a" style="left:397px;top:93px;width:1px;height:438px;background:#000"></div>

<!-- right plot -->
<div class="a" style="left:702px;top:102px;width:226px;height:206px;background:#fff;border-top:2px solid #999;border-left:2px solid #999"></div>
<svg class="a" style="left:0;top:0" width="947" height="653">
 <g shape-rendering="crispEdges">
  <path fill="#000" d="M699 106h1v196h-1z"/><path fill="#000" d="M691 301h8v1h-8z"/><path fill="#000" d="M695 291h4v1h-4z"/><path fill="#000" d="M693 282h6v1h-6z"/><path fill="#000" d="M695 272h4v1h-4z"/><path fill="#000" d="M691 262h8v1h-8z"/><path fill="#000" d="M695 253h4v1h-4z"/><path fill="#000" d="M693 243h6v1h-6z"/><path fill="#000" d="M695 233h4v1h-4z"/><path fill="#000" d="M691 224h8v1h-8z"/><path fill="#000" d="M695 214h4v1h-4z"/><path fill="#000" d="M693 205h6v1h-6z"/><path fill="#000" d="M695 195h4v1h-4z"/><path fill="#000" d="M691 185h8v1h-8z"/><path fill="#000" d="M695 176h4v1h-4z"/><path fill="#000" d="M693 166h6v1h-6z"/><path fill="#000" d="M695 156h4v1h-4z"/><path fill="#000" d="M691 147h8v1h-8z"/><path fill="#000" d="M695 137h4v1h-4z"/><path fill="#000" d="M693 127h6v1h-6z"/><path fill="#000" d="M695 118h4v1h-4z"/><path fill="#000" d="M691 108h8v1h-8z"/><path fill="#000" d="M708 310h205v1h-205z"/><path fill="#000" d="M708 310h1v9h-1z"/><path fill="#000" d="M718 310h1v5h-1z"/><path fill="#000" d="M728 310h1v7h-1z"/><path fill="#000" d="M739 310h1v5h-1z"/><path fill="#000" d="M749 310h1v9h-1z"/><path fill="#000" d="M759 310h1v5h-1z"/><path fill="#000" d="M769 310h1v7h-1z"/><path fill="#000" d="M779 310h1v5h-1z"/><path fill="#000" d="M790 310h1v9h-1z"/><path fill="#000" d="M800 310h1v5h-1z"/><path fill="#000" d="M810 310h1v7h-1z"/><path fill="#000" d="M820 310h1v5h-1z"/><path fill="#000" d="M831 310h1v9h-1z"/><path fill="#000" d="M841 310h1v5h-1z"/><path fill="#000" d="M851 310h1v7h-1z"/><path fill="#000" d="M861 310h1v5h-1z"/><path fill="#000" d="M872 310h1v9h-1z"/><path fill="#000" d="M882 310h1v5h-1z"/><path fill="#000" d="M892 310h1v7h-1z"/><path fill="#000" d="M902 310h1v5h-1z"/><path fill="#000" d="M912 310h1v9h-1z"/>
 </g>
</svg>
<div class="t" style="left:636.4px;top:295px;width:50px;text-align:right;font-size:12px;line-height:14px">0</div><div class="t" style="left:636.4px;top:256px;width:50px;text-align:right;font-size:12px;line-height:14px">200</div><div class="t" style="left:636.4px;top:218px;width:50px;text-align:right;font-size:12px;line-height:14px">400</div><div class="t" style="left:636.4px;top:179px;width:50px;text-align:right;font-size:12px;line-height:14px">600</div><div class="t" style="left:636.4px;top:141px;width:50px;text-align:right;font-size:12px;line-height:14px">800</div><div class="t" style="left:636.4px;top:102px;width:50px;text-align:right;font-size:12px;line-height:14px">1,000</div><div class="t" style="left:683.5px;top:322px;width:50px;text-align:center;font-size:12px;line-height:14px">0</div><div class="t" style="left:724.5px;top:322px;width:50px;text-align:center;font-size:12px;line-height:14px">200</div><div class="t" style="left:765.5px;top:322px;width:50px;text-align:center;font-size:12px;line-height:14px">400</div><div class="t" style="left:806.5px;top:322px;width:50px;text-align:center;font-size:12px;line-height:14px">600</div><div class="t" style="left:847.5px;top:322px;width:50px;text-align:center;font-size:12px;line-height:14px">800</div><div class="t" style="left:887.5px;top:322px;width:50px;text-align:center;font-size:12px;line-height:14px">1.000</div>

<!-- Fit button -->
<div class="btn" style="left:665px;top:366px;width:73px;height:21px"></div>
<div class="t" style="left:664px;top:371px;width:73px;text-align:center">Fit</div>

<!-- property table -->
<div class="a" style="left:655px;top:403px;width:273px;height:141px;background:#fff;border:1px solid #828282;overflow:hidden">
 <div class="a" style="left:126px;top:0;width:1px;height:21px;background:#e5e5e5"></div><div class="t" style="left:3.4px;top:4.7px">Property</div><div class="t" style="left:130.5px;top:4.7px;letter-spacing:-0.3px">Value</div><div class="a" style="left:0;top:21px;width:254px;height:16px;background:#a0a0a0"></div><svg class="a" style="left:5.0px;top:25.0px" width="11" height="8"><path d="M1 1.5L5 5.5L9 1.5" fill="none" stroke="#1a1a1a" stroke-width="1.6"/></svg><div class="t" style="left:22.5px;top:24.0px;letter-spacing:-0.17px">CompositeFunction</div><div class="a" style="left:0;top:38px;width:254px;height:16px;background:#f5f5f5"></div><div class="a" style="left:0;top:54px;width:254px;height:1px;background:#e3e3e3"></div><div class="a" style="left:0;top:55px;width:254px;height:16px;background:#fff"></div><div class="a" style="left:0;top:71px;width:254px;height:1px;background:#e3e3e3"></div><div class="a" style="left:0;top:72px;width:254px;height:16px;background:#f5f5f5"></div><div class="a" style="left:0;top:88px;width:254px;height:1px;background:#e3e3e3"></div><div class="a" style="left:0;top:89px;width:254px;height:16px;background:#fff"></div><div class="a" style="left:0;top:105px;width:254px;height:1px;background:#e3e3e3"></div><div class="a" style="left:0;top:106px;width:254px;height:16px;background:#f5f5f5"></div><div class="a" style="left:0;top:122px;width:254px;height:1px;background:#e3e3e3"></div><div class="a" style="left:0;top:123px;width:254px;height:16px;background:#fff"></div><div class="a" style="left:0;top:139px;width:254px;height:1px;background:#e3e3e3"></div><div class="a" style="left:126px;top:38px;width:1px;height:16px;background:#e3e3e3"></div><div class="a" style="left:126px;top:72px;width:1px;height:16px;background:#e3e3e3"></div><div class="a" style="left:126px;top:89px;width:1px;height:16px;background:#e3e3e3"></div><div class="a" style="left:126px;top:123px;width:1px;height:16px;background:#e3e3e3"></div><div class="t" style="left:42.3px;top:40.5px;letter-spacing:-0.25px">NumDeriv</div><div class="a" style="left:130px;top:40px;width:13px;height:13px;background:#fff;border:1px solid #333"></div><div class="t" style="left:148.6px;top:40.5px">False</div><svg class="a" style="left:25.0px;top:59.0px" width="11" height="8"><path d="M1 1.5L5 5.5L9 1.5" fill="none" stroke="#1a1a1a" stroke-width="1.6"/></svg><div class="t" style="left:42.3px;top:58.0px;letter-spacing:-0.17px">FlatBackground</div><div class="t" style="left:62.0px;top:75.2px;color:#808080">Index</div><div class="t" style="left:129.3px;top:75.2px;color:#808080">f0.</div><div class="t" style="left:63.0px;top:92.1px">A0</div><div class="t" style="left:129.3px;top:92.1px">0.000000</div><svg class="a" style="left:25.0px;top:110.0px" width="11" height="8"><path d="M1 1.5L5 5.5L9 1.5" fill="none" stroke="#1a1a1a" stroke-width="1.6"/></svg><div class="t" style="left:42.4px;top:109.1px;letter-spacing:-0.33px">Gaussian</div><div class="t" style="left:62.0px;top:126.1px;color:#808080">Index</div><div class="t" style="left:129.3px;top:126.1px;color:#808080">f1.</div><div class="a" style="left:254px;top:0;width:17px;height:139px;background:#f0f0f0"></div><div class="a" style="left:255px;top:17px;width:15px;height:63px;background:#cdcdcd"></div><svg class="a" style="left:257px;top:4px" width="12" height="8"><path d="M2.8 6L6 2.8L9.2 6" fill="none" stroke="#555" stroke-width="2"/></svg><svg class="a" style="left:257px;top:127px" width="12" height="8"><path d="M2.8 2L6 5.2L9.2 2" fill="none" stroke="#555" stroke-width="2"/></svg>
</div>

<!-- Fit from row -->
<div class="t" style="left:663.8px;top:563px">Fit from:</div>
<div class="inp" style="left:711px;top:559px;width:91px;height:20px"></div>
<div class="t" style="left:714.3px;top:564px">-15</div>
<div class="t" style="left:807.7px;top:563px">to:</div>
<div class="inp" style="left:828px;top:559px;width:91px;height:20px"></div>
<div class="t" style="left:831.3px;top:564px">15</div>

<!-- d-spacing row -->
<div class="t" style="left:19.9px;top:552px;letter-spacing:-0.28px">d-Spacing</div>
<div class="inp" style="left:73px;top:547px;width:100px;height:20px"></div>
<div class="t" style="left:76.5px;top:552px">3.46057</div>
<div class="a" style="left:179px;top:546px;width:248px;height:23px;background:#f0f0f0;border:1px solid #828790;box-shadow:inset 0 0 0 1px #fff"></div>
<div class="btn" style="left:242px;top:547px;width:21px;height:21px"></div>
<div class="inp" style="left:433px;top:547px;width:100px;height:20px"></div>
<div class="t" style="left:436.4px;top:552px">4.74347</div>
<div class="btn" style="left:540px;top:547px;width:73px;height:21px"></div>
<div class="t" style="left:539px;top:552px;width:73px;text-align:center">Reset</div>

<div class="t" style="left:11px;top:585px">Move cursor over instrument to see detector information.</div>
<div class="btn" style="left:12px;top:621px;width:23px;height:21px"></div>
<div class="t" style="left:12px;top:625.5px;width:23px;text-align:center">?</div>
</body></html>
